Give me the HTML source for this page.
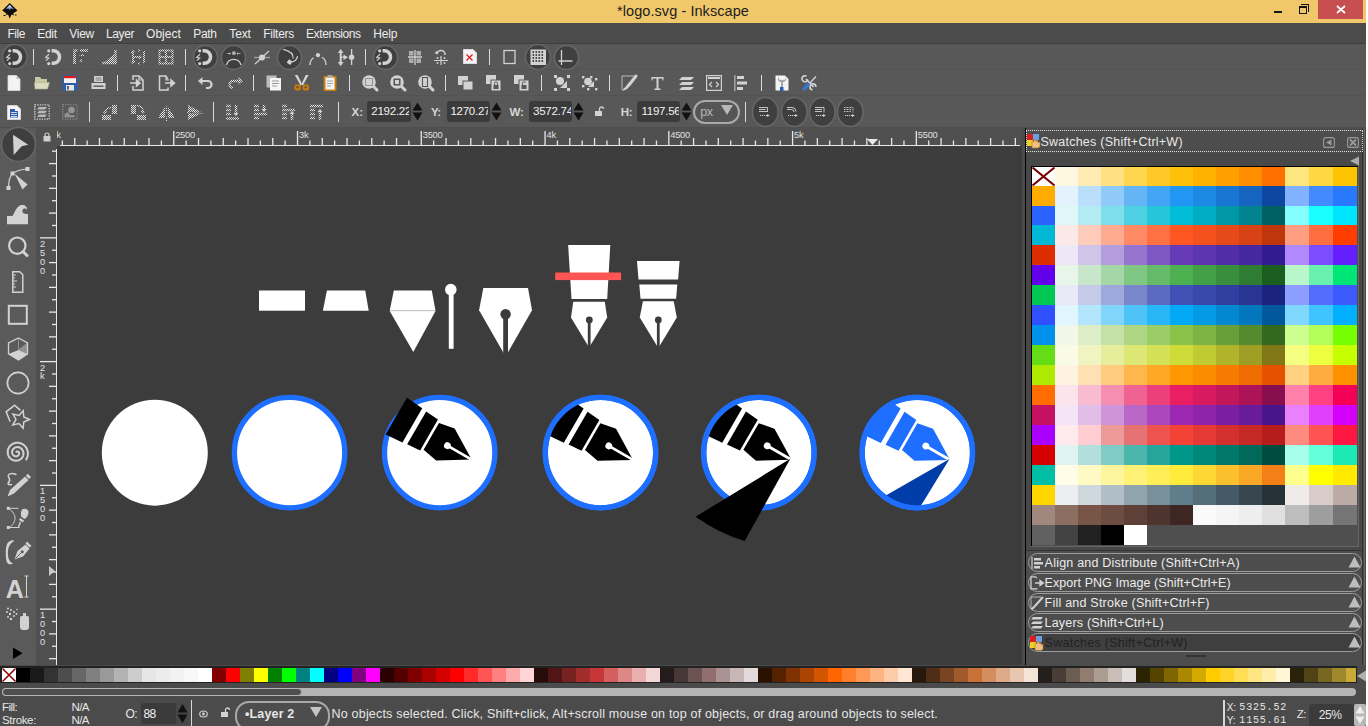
<!DOCTYPE html><html><head><meta charset="utf-8"><style>
*{margin:0;padding:0;box-sizing:border-box}
body{width:1368px;height:726px;overflow:hidden;position:relative;background:#4b4b4b;font-family:"Liberation Sans",sans-serif}
div{position:absolute}
.t{white-space:nowrap;line-height:1}
svg{position:absolute;overflow:visible}
</style></head><body>
<svg width="0" height="0" style="position:absolute;left:0;top:0"><defs><pattern id="ck" width="2" height="2" patternUnits="userSpaceOnUse"><rect width="1" height="1" fill="#e2e2e2"/><rect x="1" y="1" width="1" height="1" fill="#e2e2e2"/></pattern></defs></svg>
<div style="left:0px;top:0px;width:1368px;height:23px;background:#f0c86b"></div>
<svg style="left:1px;top:2px;" width="18" height="18" viewBox="0 0 18 18"><defs><linearGradient id="lg" x1="0" y1="0" x2="0" y2="1"><stop offset="0" stop-color="#ffffff"/><stop offset="1" stop-color="#3a6ab0"/></linearGradient></defs><path d="M8.7 1L16.5 8.5L12 11.5L13.5 13.5L10.5 12.5L8.7 16.5L7 12.5L4.5 13L5.5 11.5L1.2 8.5Z" fill="#0d0d0d"/><path d="M8.7 2.8L13 7.2L10 6.6L8.7 8L7.3 6.6L4.4 7.2Z" fill="url(#lg)"/><path d="M2.5 13.5h2M14 13h1.5" stroke="#111" stroke-width="1.2"/></svg>
<div style="left:1274px;top:11px;width:8px;height:2px;background:#151515"></div>
<div style="left:1301px;top:4px;width:8px;height:8px;border:1px solid #151515;border-width:1px 1px 0 0"></div>
<div style="left:1299px;top:6px;width:8px;height:8px;border:1px solid #151515;border-top-width:2px;background:#f0c86b"></div>
<div style="left:1318px;top:0px;width:45px;height:19px;background:#c84f4f"></div>
<svg style="left:1336px;top:5px;" width="10" height="9" viewBox="0 0 10 9"><path d="M1 1L9 8M9 1L1 8" stroke="#fff" stroke-width="1.7"/></svg>
<div style="left:0px;top:23px;width:1368px;height:20px;background:#4b4b4b"></div>
<div style="left:0px;top:43px;width:1368px;height:1px;background:#3e3e3e"></div>
<div style="left:0px;top:44px;width:1368px;height:84px;background:#585858"></div>
<div style="left:0px;top:69px;width:1368px;height:1px;background:#535353"></div>
<div style="left:0px;top:95px;width:1368px;height:1px;background:#535353"></div>
<div style="left:0px;top:127px;width:1368px;height:1px;background:#4e4e4e"></div>
<svg style="left:0.7999999999999989px;top:43.2px;" width="27.6" height="27.6" viewBox="0 0 27.6 27.6"><ellipse cx="13.8" cy="13.8" rx="12.3" ry="12.3" fill="#3f3f3f" stroke="#676767" stroke-width="1.5"/></svg>
<svg style="left:4.6px;top:47px;" width="20" height="20" viewBox="0 0 20 20"><g transform="translate(10 10)"><path d="M-2.4 -6.25H-0.7A6.25 6.25 0 0 1 -0.7 6.25H-2.4" fill="none" stroke="#d2d2d2" stroke-width="3.5"/><circle cx="-5.3" cy="-6.2" r="1.6" fill="#d2d2d2"/><circle cx="-5.3" cy="6.6" r="1.6" fill="#d2d2d2"/><path d="M-5 -2.8L-8.3 0.3L-5.3 1L-8.3 3.6" stroke="#d2d2d2" stroke-width="1.2" fill="none"/></g></svg>
<div style="left:33px;top:49px;width:1.3px;height:16px;background:#dadada"></div>
<svg style="left:44px;top:47px;" width="20" height="20" viewBox="0 0 20 20"><g transform="translate(10 10)"><path d="M-2.4 -6.25H-0.7A6.25 6.25 0 0 1 -0.7 6.25H-2.4" fill="none" stroke="#d2d2d2" stroke-width="3.5"/><circle cx="-5.3" cy="-6.2" r="1.6" fill="#d2d2d2"/><circle cx="-5.3" cy="6.6" r="1.6" fill="#d2d2d2"/><path d="M-5 -2.8L-8.3 0.3L-5.3 1L-8.3 3.6" stroke="#d2d2d2" stroke-width="1.2" fill="none"/></g></svg>
<svg style="left:73px;top:49px;" width="16" height="16" viewBox="0 0 16 16"><path d="M1.5 15V1.5h3M7 1.5h8" stroke="url(#ck)" stroke-width="2.5" fill="none"/><path d="M1.5 6v9" stroke="url(#ck)" stroke-width="2.5" fill="none"/><path d="M6 12l3-2v4z M9 5l3 2h-6z" fill="url(#ck)"/></svg>
<svg style="left:101px;top:49px;" width="17" height="16" viewBox="0 0 17 16"><path d="M1 14h15M14.5 1v14" stroke="url(#ck)" stroke-width="2.5" fill="none"/><path d="M4 13L13 5v8z" fill="url(#ck)"/></svg>
<svg style="left:130px;top:49px;" width="16" height="16" viewBox="0 0 16 16"><path d="M3 3v10M14 2v12M4 8h6" stroke="url(#ck)" stroke-width="2" fill="none"/><path d="M12 8l-3-2.5v5z" fill="url(#ck)"/><path d="M3 0.5l-2.5 3.5h5zM3 15.5l-2.5-3.5h5z" fill="url(#ck)"/><path d="M8 1.5h2M8 14.5h2" stroke="url(#ck)" stroke-width="2"/></svg>
<svg style="left:158px;top:49px;" width="16" height="16" viewBox="0 0 16 16"><path d="M1.5 1.5h13v13h-13zM8 1.5v13M1.5 8h13" stroke="url(#ck)" stroke-width="2" fill="none"/></svg>
<div style="left:185px;top:49px;width:1.3px;height:16px;background:#dadada"></div>
<svg style="left:191.5px;top:43.5px;" width="27.0" height="27.0" viewBox="0 0 27.0 27.0"><ellipse cx="13.5" cy="13.5" rx="12.0" ry="12.0" fill="#3f3f3f" stroke="#676767" stroke-width="1.5"/></svg>
<svg style="left:195px;top:47px;" width="20" height="20" viewBox="0 0 20 20"><g transform="translate(10 10)"><path d="M-2.4 -6.25H-0.7A6.25 6.25 0 0 1 -0.7 6.25H-2.4" fill="none" stroke="#d2d2d2" stroke-width="3.5"/><circle cx="-5.3" cy="-6.2" r="1.6" fill="#d2d2d2"/><circle cx="-5.3" cy="6.6" r="1.6" fill="#d2d2d2"/><path d="M-5 -2.8L-8.3 0.3L-5.3 1L-8.3 3.6" stroke="#d2d2d2" stroke-width="1.2" fill="none"/></g></svg>
<svg style="left:220.0px;top:43.5px;" width="27.0" height="27.0" viewBox="0 0 27.0 27.0"><ellipse cx="13.5" cy="13.5" rx="12.0" ry="12.0" fill="#3f3f3f" stroke="#676767" stroke-width="1.5"/></svg>
<svg style="left:225px;top:49px;" width="17" height="17" viewBox="0 0 17 17"><path d="M1.5 16A7.5 7.5 0 0 1 16 16" fill="none" stroke="#d2d2d2" stroke-width="1.3"/><rect x="7.3" y="2.5" width="3.2" height="3.2" fill="#d2d2d2" opacity=".85"/><path d="M2 4.5L5.5 4.5M15.5 4.5L12 4.5" stroke="#d2d2d2" stroke-width="1" opacity=".7"/><path d="M6 4.5L4.5 3v3zM11.5 4.5L13 3v3z" fill="#d2d2d2" opacity=".7"/></svg>
<svg style="left:254px;top:49px;" width="17" height="16" viewBox="0 0 17 16"><path d="M1 15L15 2" stroke="#d2d2d2" stroke-width="1.2"/><path d="M0 8.5h16" stroke="#d2d2d2" stroke-width="1.3" opacity=".6"/><circle cx="8" cy="8.5" r="3" fill="#d2d2d2"/></svg>
<svg style="left:275.5px;top:43.5px;" width="27.0" height="27.0" viewBox="0 0 27.0 27.0"><ellipse cx="13.5" cy="13.5" rx="12.0" ry="12.0" fill="#3f3f3f" stroke="#676767" stroke-width="1.5"/></svg>
<svg style="left:270px;top:44px;" width="90" height="26" viewBox="0 0 90 26"><path d="M13.2 5.3C18 6.5 24 9.5 23 14.5" fill="none" stroke="#d2d2d2" stroke-width="1.2"/><path d="M27.6 12.2C27 15 24.5 17.5 22 18" fill="none" stroke="#d2d2d2" stroke-width="1.2"/><rect x="17.5" y="16" width="4.2" height="4.2" transform="rotate(35 19.6 18.1)" fill="#d2d2d2"/><path d="M40.1 21A7.9 7.9 0 0 1 43.6 13.7M51.9 13.3A7.9 7.9 0 0 1 55.8 21" fill="none" stroke="#d2d2d2" stroke-width="1.3"/><circle cx="48" cy="11.2" r="2.1" fill="#d2d2d2"/><path d="M70.7 7v14" stroke="#d2d2d2" stroke-width="2"/><path d="M70.7 5L67.8 9h5.8zM70.7 22L67.8 18h5.8zM78 13.2L73.5 10.5v5.4z" fill="#d2d2d2"/><path d="M71 13.2h3M81.6 5v16" stroke="#d2d2d2" stroke-width="1.3"/><circle cx="81.6" cy="13.2" r="2.7" fill="#d2d2d2"/></svg>
<div style="left:365px;top:49px;width:1.3px;height:16px;background:#dadada"></div>
<svg style="left:371.5px;top:43.5px;" width="27.0" height="27.0" viewBox="0 0 27.0 27.0"><ellipse cx="13.5" cy="13.5" rx="12.0" ry="12.0" fill="#3f3f3f" stroke="#676767" stroke-width="1.5"/></svg>
<svg style="left:375px;top:47px;" width="20" height="20" viewBox="0 0 20 20"><g transform="translate(10 10)"><path d="M-2.4 -6.25H-0.7A6.25 6.25 0 0 1 -0.7 6.25H-2.4" fill="none" stroke="#d2d2d2" stroke-width="3.5"/><circle cx="-5.3" cy="-6.2" r="1.6" fill="#d2d2d2"/><circle cx="-5.3" cy="6.6" r="1.6" fill="#d2d2d2"/><path d="M-5 -2.8L-8.3 0.3L-5.3 1L-8.3 3.6" stroke="#d2d2d2" stroke-width="1.2" fill="none"/></g></svg>
<svg style="left:407px;top:49px;" width="16" height="16" viewBox="0 0 16 16"><path d="M1 8h14M8 1v15" stroke="#d2d2d2" stroke-width="1.3"/><path d="M2 2h4.5v4.5H2zM9.5 2H14v4.5H9.5zM2 9.5h4.5V14H2zM9.5 9.5H14V14H9.5z" fill="#d2d2d2" opacity=".7"/></svg>
<svg style="left:433px;top:49px;" width="16" height="17" viewBox="0 0 16 17"><path d="M4 5a4 4 0 0 1 8 1" fill="none" stroke="#d2d2d2" stroke-width="1.5"/><path d="M1.5 4l3-2.5 0.5 4z" fill="#d2d2d2"/><path d="M1 11.5h14M8 7v9" stroke="#d2d2d2" stroke-width="1.2"/><circle cx="4.5" cy="9" r="1" fill="#d2d2d2"/><circle cx="11.5" cy="9" r="1" fill="#d2d2d2"/><circle cx="4.5" cy="14" r="1" fill="#d2d2d2"/><circle cx="11.5" cy="14" r="1" fill="#d2d2d2"/></svg>
<svg style="left:463px;top:49px;" width="14" height="15" viewBox="0 0 14 15"><path d="M0.5 0.5h9.5l3.5 3.5v10.5h-13z" fill="#f4f4f4" stroke="#ddd" stroke-width="1"/><path d="M3.5 5.5l6 6M9.5 5.5l-6 6" stroke="#e8141a" stroke-width="1.2"/></svg>
<div style="left:489px;top:49px;width:1.3px;height:16px;background:#dadada"></div>
<svg style="left:503px;top:49px;" width="14" height="16" viewBox="0 0 14 16"><rect x="1" y="1.5" width="11" height="13" fill="none" stroke="#d2d2d2" stroke-width="1.3"/></svg>
<svg style="left:524px;top:43px;" width="28" height="28" viewBox="0 0 28 28"><ellipse cx="14" cy="14" rx="12.5" ry="12.5" fill="#3f3f3f" stroke="#676767" stroke-width="1.5"/></svg>
<svg style="left:530px;top:49px;" width="17" height="16" viewBox="0 0 17 16"><rect x="0.5" y="0.5" width="15.5" height="15.5" fill="#d2d2d2"/><path d="M2.5 3h12M2.5 6h12M2.5 9h12M2.5 12h12" stroke="#1b1b1b" stroke-width="1.3" stroke-dasharray="1.6 1.4"/></svg>
<svg style="left:552.5px;top:43.5px;" width="27.0" height="27.0" viewBox="0 0 27.0 27.0"><ellipse cx="13.5" cy="13.5" rx="12.0" ry="12.0" fill="#3f3f3f" stroke="#676767" stroke-width="1.5"/></svg>
<svg style="left:558px;top:49px;" width="16" height="16" viewBox="0 0 16 16"><path d="M3.5 1v15M0.5 12h14" stroke="#d2d2d2" stroke-width="1.3"/></svg>
<svg style="left:7px;top:75px;" width="14" height="16" viewBox="0 0 14 16"><path d="M1 0.5h8.5l3.5 3.5v11.5h-12z" fill="#f3f3f3" stroke="#dcdcdc" stroke-width="0.8"/><path d="M9.5 0.5v3.5h3.5" fill="#bbb"/></svg>
<svg style="left:34px;top:76px;" width="16" height="14" viewBox="0 0 16 14"><path d="M1 1h5l1.5 2H13v9H1z" fill="#c6cba5"/><path d="M0.5 6.5h15l-2 6.5H1z" fill="#d9dcc0" stroke="#aeb38c" stroke-width="0.6"/></svg>
<svg style="left:62px;top:75px;" width="16" height="16" viewBox="0 0 16 16"><rect x="0.5" y="0.5" width="15" height="15" rx="1.5" fill="#2f5ea8"/><rect x="2" y="1" width="12" height="7" fill="#f2f2f2"/><rect x="2" y="1" width="12" height="2.2" fill="#e1191c"/><rect x="4" y="10" width="8" height="5.5" fill="#e8e8e8"/><rect x="5" y="11" width="2" height="3.5" fill="#4a6aa0"/></svg>
<svg style="left:91px;top:75px;" width="15" height="15" viewBox="0 0 15 15"><rect x="3" y="1" width="9" height="6" fill="#d2d2d2"/><path d="M4.5 3h6M4.5 5h6" stroke="#666" stroke-width=".8"/><rect x="0.5" y="8" width="14" height="6" fill="#d2d2d2"/><rect x="2.5" y="10.5" width="10" height="1.5" fill="#5e5e5e"/></svg>
<div style="left:117px;top:75px;width:1.3px;height:16px;background:#dadada"></div>
<svg style="left:130px;top:75px;" width="16" height="16" viewBox="0 0 16 16"><path d="M3 5V1h6l4 4v10H3v-4" fill="none" stroke="#d2d2d2" stroke-width="1.5"/><path d="M9 1v4h4" fill="none" stroke="#d2d2d2" stroke-width="1.2"/><path d="M0 8h6M10 8L6.5 5v6z" stroke="#d2d2d2" stroke-width="1.5" fill="#d2d2d2"/></svg>
<svg style="left:158px;top:75px;" width="17" height="16" viewBox="0 0 17 16"><path d="M10 4.5L8 1H1.5v14H10v-2.5" fill="none" stroke="#d2d2d2" stroke-width="1.5"/><path d="M8 1v4h3" fill="none" stroke="#d2d2d2" stroke-width="1.2"/><path d="M7 8h6M16.5 8L13 5v6z" stroke="#d2d2d2" stroke-width="1.6" fill="#d2d2d2"/></svg>
<div style="left:185px;top:75px;width:1.3px;height:16px;background:#dadada"></div>
<svg style="left:198px;top:76px;" width="16" height="14" viewBox="0 0 16 14"><path d="M3 5h7a3.5 3.5 0 0 1 0 7H8" fill="none" stroke="#d2d2d2" stroke-width="2.2"/><path d="M0 5L4.5 1v8z" fill="#d2d2d2"/></svg>
<svg style="left:227px;top:76px;" width="16" height="14" viewBox="0 0 16 14"><path d="M13 5H6a3.5 3.5 0 0 0 0 7" fill="none" stroke="url(#ck)" stroke-width="2.4"/><path d="M16 5L11.5 1v8z" fill="url(#ck)"/></svg>
<div style="left:253px;top:75px;width:1.3px;height:16px;background:#dadada"></div>
<svg style="left:266px;top:75px;" width="16" height="16" viewBox="0 0 16 16"><rect x="0.5" y="0.5" width="10" height="12" fill="#bdbdbd"/><rect x="4" y="3" width="11" height="12.5" fill="#f5f5f5"/><path d="M6 6h7M6 8.5h7M6 11h5" stroke="#9a9a9a" stroke-width="1"/></svg>
<svg style="left:294px;top:75px;" width="16" height="16" viewBox="0 0 16 16"><path d="M0.8 0L3.6 0L8.2 9.5L6.6 10.5Z" fill="#d6d6d6"/><path d="M14.6 0L11.8 0L7.2 9.5L8.8 10.5Z" fill="#d6d6d6"/><rect x="0.4" y="9.6" width="6.3" height="6" rx="1.8" fill="#c97c0e"/><rect x="8.7" y="9.6" width="6.3" height="6" rx="1.8" fill="#c97c0e"/><circle cx="3.5" cy="12.2" r="1.3" fill="#7a5a2a"/><circle cx="11.8" cy="12.2" r="1.3" fill="#7a5a2a"/></svg>
<svg style="left:323px;top:75px;" width="14" height="16" viewBox="0 0 14 16"><rect x="0.5" y="1" width="13" height="15" rx="1" fill="#c97d0d"/><rect x="2.5" y="2.5" width="9" height="12" fill="#f4f4f4"/><rect x="4.5" y="0" width="5" height="2.5" fill="#aaa"/><path d="M4 6h6M4 8.5h6M4 11h4" stroke="#999" stroke-width=".9"/></svg>
<div style="left:349px;top:75px;width:1.3px;height:16px;background:#dadada"></div>
<svg style="left:362px;top:75px;" width="16" height="16" viewBox="0 0 16 16"><circle cx="7" cy="7" r="6.8" fill="#d2d2d2"/><path d="M11.5 11.5L15 15" stroke="#d2d2d2" stroke-width="3" stroke-linecap="round"/><rect x="3.5" y="3.5" width="7" height="7" fill="none" stroke="#555" stroke-width="1.1" stroke-dasharray="1 1"/></svg>
<svg style="left:390px;top:75px;" width="16" height="16" viewBox="0 0 16 16"><circle cx="7" cy="7" r="6.8" fill="#d2d2d2"/><path d="M11.5 11.5L15 15" stroke="#d2d2d2" stroke-width="3" stroke-linecap="round"/><rect x="3.5" y="3.5" width="7" height="7" fill="#555"/><rect x="5" y="5" width="4" height="4" fill="#d2d2d2"/></svg>
<svg style="left:418px;top:75px;" width="16" height="16" viewBox="0 0 16 16"><circle cx="7" cy="7" r="6.8" fill="#d2d2d2"/><path d="M11.5 11.5L15 15" stroke="#d2d2d2" stroke-width="3" stroke-linecap="round"/><rect x="4.5" y="2.5" width="5" height="9" fill="none" stroke="#555" stroke-width="1.1"/></svg>
<div style="left:445px;top:75px;width:1.3px;height:16px;background:#dadada"></div>
<svg style="left:458px;top:76px;" width="16" height="14" viewBox="0 0 16 14"><rect x="0" y="0" width="10" height="9" fill="#d2d2d2"/><rect x="5" y="5" width="10" height="9" fill="#d2d2d2" stroke="#585858" stroke-width="1"/></svg>
<svg style="left:486px;top:75px;" width="16" height="16" viewBox="0 0 16 16"><rect x="0" y="0" width="10" height="9" fill="#d2d2d2"/><rect x="5" y="5" width="10" height="11" fill="#d2d2d2" stroke="#585858" stroke-width="1"/><rect x="7.5" y="10" width="5" height="4" fill="#555"/><path d="M8.5 10V8.5a1.5 1.5 0 0 1 3 0V10" fill="none" stroke="#555" stroke-width="1"/></svg>
<svg style="left:514px;top:75px;" width="16" height="16" viewBox="0 0 16 16"><rect x="0" y="0" width="10" height="9" fill="#d2d2d2"/><rect x="5" y="5" width="10" height="11" fill="#d2d2d2" stroke="#585858" stroke-width="1"/><rect x="7.5" y="10" width="5" height="4" fill="#555"/><path d="M8.5 10V8.5a1.5 1.5 0 0 1 3 -.5" fill="none" stroke="#555" stroke-width="1"/></svg>
<div style="left:541px;top:75px;width:1.3px;height:16px;background:#dadada"></div>
<svg style="left:554px;top:75px;" width="16" height="16" viewBox="0 0 16 16"><rect x="0" y="0" width="3" height="3" fill="#d2d2d2"/><rect x="13" y="0" width="3" height="3" fill="#d2d2d2"/><rect x="0" y="13" width="3" height="3" fill="#d2d2d2"/><rect x="13" y="13" width="3" height="3" fill="#d2d2d2"/><circle cx="6" cy="6" r="4" fill="#d2d2d2"/><path d="M13 6v7H6z" fill="#d2d2d2"/></svg>
<svg style="left:582px;top:76px;" width="16" height="14" viewBox="0 0 16 14"><rect x="0" y="0" width="2.4" height="2.4" fill="#d2d2d2"/><rect x="8" y="0" width="2.4" height="2.4" fill="#d2d2d2"/><rect x="13" y="2" width="2.4" height="2.4" fill="#d2d2d2"/><rect x="0" y="9" width="2.4" height="2.4" fill="#d2d2d2"/><rect x="5" y="12" width="2.4" height="2.4" fill="#d2d2d2"/><rect x="13" y="12" width="2.4" height="2.4" fill="#d2d2d2"/><circle cx="6" cy="5.5" r="3.8" fill="#d2d2d2"/><path d="M12 5v6H6z" fill="#d2d2d2"/></svg>
<div style="left:609px;top:75px;width:1.3px;height:16px;background:#dadada"></div>
<svg style="left:621px;top:75px;" width="16" height="16" viewBox="0 0 16 16"><path d="M1 15V1h12" fill="none" stroke="#d2d2d2" stroke-width="1" opacity=".8"/><path d="M15 1C12 5 9 9 6.5 11.5" stroke="#d2d2d2" stroke-width="3" stroke-linecap="round"/><path d="M7 10.5C5 11 3 13 1 15.5 4 15.5 7 14 7.5 12z" fill="#d2d2d2"/></svg>
<svg style="left:651px;top:76px;" width="14" height="14" viewBox="0 0 14 14"><path d="M0.5 1h12v3.5h-.8l-.7-2H7.5v10h2v1.5h-6v-1.5h2v-10H2l-.7 2H.5z" fill="#d2d2d2"/></svg>
<svg style="left:679px;top:76px;" width="15" height="14" viewBox="0 0 15 14"><path d="M3 1h12l-3 3H0zM3 6h12l-3 3H0zM3 11h12l-3 3H0z" fill="#d2d2d2"/></svg>
<svg style="left:706px;top:75px;" width="16" height="16" viewBox="0 0 16 16"><rect x="0.6" y="0.6" width="14.8" height="14.8" fill="none" stroke="#d2d2d2" stroke-width="1.2"/><rect x="2" y="2" width="12" height="2" fill="#d2d2d2"/><path d="M6 7L3.5 9.5 6 12M10 7l2.5 2.5L10 12" fill="none" stroke="#d2d2d2" stroke-width="1.2"/></svg>
<svg style="left:734px;top:75px;" width="14" height="16" viewBox="0 0 14 16"><rect x="0" y="0" width="1.6" height="16" fill="#d2d2d2" opacity=".6"/><rect x="3" y="1" width="7" height="3" fill="#d2d2d2"/><rect x="3" y="6.5" width="10" height="3" fill="#d2d2d2"/><rect x="3" y="12" width="6" height="3" fill="#d2d2d2"/></svg>
<div style="left:761px;top:75px;width:1.3px;height:16px;background:#dadada"></div>
<svg style="left:775px;top:75px;" width="14" height="16" viewBox="0 0 14 16"><path d="M0.5 0.5h9.5l3.5 3.5v11.5h-13z" fill="#f4f4f4"/><path d="M3.5 2a3 3 0 0 0 2.5 5v5h2V7a3 3 0 0 0 2.5-5v2.5L7 5 4 4.5z" fill="#a8a8a8"/><rect x="5" y="12" width="3.5" height="4" fill="#2d5bb5"/></svg>
<svg style="left:802px;top:75px;" width="15" height="16" viewBox="0 0 15 16"><path d="M4 4L11.5 12" stroke="#d2d2d2" stroke-width="1.8"/><path d="M4.5 1.2A3 3 0 1 0 5.8 4.6" fill="none" stroke="#d2d2d2" stroke-width="1.6"/><path d="M10.5 14.8A3 3 0 1 1 13.9 12" fill="none" stroke="#d2d2d2" stroke-width="1.6"/><path d="M7.5 8.5L14 1.5" stroke="#d2d2d2" stroke-width="1.4"/><path d="M2 14L6.5 9.5" stroke="#3b76d0" stroke-width="3.2" stroke-linecap="round"/></svg>
<svg style="left:7px;top:105px;" width="14" height="15" viewBox="0 0 14 15"><path d="M0.5 0.5h9.5l3.5 3.5v10.5h-13z" fill="#f6f6f6" stroke="#ddd" stroke-width=".8"/><path d="M3 4h5v2h3v6.5H3z" fill="#2c5eb0"/><path d="M4 7.5h6M4 9.5h6M4 11.5h6" stroke="#f6f6f6" stroke-width=".8"/></svg>
<svg style="left:34px;top:104px;" width="16" height="16" viewBox="0 0 16 16"><rect x="0.8" y="0.8" width="14.4" height="14.4" fill="none" stroke="#d2d2d2" stroke-width="1.3" stroke-dasharray="1.3 1.2"/><path d="M5 3h8l-2 2.5H3zM5 6.8h8l-2 2.5H3zM5 10.6h8l-2 2.5H3z" fill="#d2d2d2" opacity=".8"/></svg>
<svg style="left:62px;top:104px;" width="16" height="16" viewBox="0 0 16 16"><rect x="0.8" y="0.8" width="14.4" height="14.4" fill="none" stroke="#d2d2d2" stroke-width="1.1" stroke-dasharray="1.1 1.4" opacity=".55"/><circle cx="9.5" cy="6" r="3.3" fill="#d2d2d2" opacity=".5"/><path d="M2.5 13.5V10l3-2 3 3 4 0v2.5z" fill="#d2d2d2" opacity=".45"/></svg>
<div style="left:89px;top:102px;width:1.3px;height:20px;background:#dadada"></div>
<svg style="left:101px;top:104px;" width="17" height="17" viewBox="0 0 17 17"><path d="M11 1h5v9h-5zM1 11h9v5H1z" fill="url(#ck)"/><path d="M10 3.5a6 6 0 0 0-6 5" fill="none" stroke="url(#ck)" stroke-width="1.4"/><path d="M1.5 7.5l2.5 3 2.5-3z" fill="url(#ck)"/></svg>
<svg style="left:130px;top:104px;" width="17" height="17" viewBox="0 0 17 17"><path d="M1 1h5v9H1zM7 11h9v5H7z" fill="url(#ck)"/><path d="M7 1.5a6 6 0 0 1 6 6" fill="none" stroke="url(#ck)" stroke-width="1.4"/><path d="M10.5 7l2.5 3 2.5-3z" fill="url(#ck)"/></svg>
<svg style="left:158px;top:104px;" width="17" height="17" viewBox="0 0 17 17"><path d="M7 3v11H0zM10 3v11h7z" fill="url(#ck)"/><path d="M8.5 1v16" stroke="url(#ck)" stroke-width="1.2" stroke-dasharray="1.5 1"/></svg>
<svg style="left:187px;top:104px;" width="16" height="17" viewBox="0 0 16 17"><path d="M1 1l13 7H1zM1 9.5h13L1 16z" fill="url(#ck)"/><path d="M0 8.8h16" stroke="url(#ck)" stroke-width="1.2" stroke-dasharray="1.5 1"/></svg>
<div style="left:213px;top:102px;width:1.3px;height:20px;background:#dadada"></div>
<svg style="left:226px;top:104px;" width="14" height="17" viewBox="0 0 14 17"><path d="M0 2h5M0 6h5M0 10h5M0 14.5h13" stroke="url(#ck)" stroke-width="2.5" fill="none"/><path d="M10 1v10" stroke="url(#ck)" stroke-width="2.5" fill="none"/><path d="M7.5 9l2.5 3 2.5-3" fill="#d2d2d2"/></svg>
<svg style="left:254px;top:104px;" width="14" height="17" viewBox="0 0 14 17"><path d="M0 2h5M0 6h5M0 10h13M0 14h5" stroke="url(#ck)" stroke-width="2.5" fill="none"/><path d="M10 1v6" stroke="url(#ck)" stroke-width="2.5" fill="none"/><path d="M7.5 5l2.5 3 2.5-3" fill="#d2d2d2"/></svg>
<svg style="left:282px;top:104px;" width="14" height="17" viewBox="0 0 14 17"><path d="M0 2h5M0 6h13M0 10h5M0 14h5" stroke="url(#ck)" stroke-width="2.5" fill="none"/><path d="M10 9v7" stroke="url(#ck)" stroke-width="2.5" fill="none"/><path d="M7.5 10l2.5-3 2.5 3" fill="#d2d2d2"/></svg>
<svg style="left:310px;top:104px;" width="14" height="17" viewBox="0 0 14 17"><path d="M0 2h13M0 6h5M0 10h5M0 14h5" stroke="url(#ck)" stroke-width="2.5" fill="none"/><path d="M10 7v9" stroke="url(#ck)" stroke-width="2.5" fill="none"/><path d="M7.5 8l2.5-3 2.5 3" fill="#d2d2d2"/></svg>
<div style="left:338px;top:102px;width:1.3px;height:20px;background:#dadada"></div>
<div style="left:367px;top:101px;width:44px;height:21px;background:#3b3b3b;border-radius:3px"></div>
<svg style="left:412px;top:101px;" width="11" height="21" viewBox="0 0 11 21"><path d="M5.5 1.5L10.5 9.5H.5zM5.5 19.5L10.5 11.5H.5z" fill="#111"/></svg>
<div style="left:446.5px;top:101px;width:43px;height:21px;background:#3b3b3b;border-radius:3px"></div>
<svg style="left:490.5px;top:101px;" width="11" height="21" viewBox="0 0 11 21"><path d="M5.5 1.5L10.5 9.5H.5zM5.5 19.5L10.5 11.5H.5z" fill="#111"/></svg>
<div style="left:529px;top:101px;width:43px;height:21px;background:#3b3b3b;border-radius:3px"></div>
<svg style="left:573px;top:101px;" width="11" height="21" viewBox="0 0 11 21"><path d="M5.5 1.5L10.5 9.5H.5zM5.5 19.5L10.5 11.5H.5z" fill="#111"/></svg>
<svg style="left:594px;top:106px;" width="10" height="10" viewBox="0 0 10 10"><rect x="1" y="5" width="7" height="5" fill="#d2d2d2"/><path d="M5.5 5V3a2 2 0 0 1 4 0" fill="none" stroke="#d2d2d2" stroke-width="1.3"/></svg>
<div style="left:637px;top:101px;width:43px;height:21px;background:#3b3b3b;border-radius:3px"></div>
<svg style="left:681px;top:101px;" width="11" height="21" viewBox="0 0 11 21"><path d="M5.5 1.5L10.5 9.5H.5zM5.5 19.5L10.5 11.5H.5z" fill="#111"/></svg>
<div style="left:693px;top:99.5px;width:47px;height:24px;border:2px solid #aaaaaa;border-radius:12px;background:#555"></div>
<svg style="left:720px;top:104px;" width="15" height="12" viewBox="0 0 15 12"><path d="M1 1h12L7 11z" fill="#b8b8b8"/></svg>
<div style="left:745px;top:102px;width:1.3px;height:20px;background:#dadada"></div>
<svg style="left:751.4000000000001px;top:95.7px;" width="28.6" height="32" viewBox="0 0 28.6 32"><ellipse cx="14.3" cy="16" rx="12.8" ry="14.5" fill="#3f3f3f" stroke="#676767" stroke-width="1.5"/></svg>
<svg style="left:779.7px;top:95.7px;" width="28.6" height="32" viewBox="0 0 28.6 32"><ellipse cx="14.3" cy="16" rx="12.8" ry="14.5" fill="#3f3f3f" stroke="#676767" stroke-width="1.5"/></svg>
<svg style="left:807.7px;top:95.7px;" width="28.6" height="32" viewBox="0 0 28.6 32"><ellipse cx="14.3" cy="16" rx="12.8" ry="14.5" fill="#3f3f3f" stroke="#676767" stroke-width="1.5"/></svg>
<svg style="left:836.0px;top:95.7px;" width="28.6" height="32" viewBox="0 0 28.6 32"><ellipse cx="14.3" cy="16" rx="12.8" ry="14.5" fill="#3f3f3f" stroke="#676767" stroke-width="1.5"/></svg>
<svg style="left:759px;top:106px;" width="13" height="12" viewBox="0 0 13 12"><path d="M0 1.5h8.5M0 3.5h6.5M8.5 1.5v4.5M0 5.5h8.5" stroke="#d2d2d2" stroke-width="0.9" fill="none"/><path d="M1 9.5h7" stroke="#d2d2d2" stroke-width="1" stroke-dasharray="1.2 .8"/><path d="M8 8l2.8 1.5L8 11z" fill="#d2d2d2"/></svg>
<svg style="left:787px;top:106px;" width="13" height="12" viewBox="0 0 13 12"><path d="M0 1.5h5a4 4 0 0 1 4 4M0 3.5h4.5a2.5 2.5 0 0 1 2.5 2.5" stroke="#d2d2d2" stroke-width="0.9" fill="none"/><path d="M1 9.5h7" stroke="#d2d2d2" stroke-width="1" stroke-dasharray="1.2 .8"/><path d="M8 8l2.8 1.5L8 11z" fill="#d2d2d2"/></svg>
<svg style="left:815px;top:106px;" width="13" height="12" viewBox="0 0 13 12"><path d="M0 1.5h9M0 3.5h7M0 5.5h7M9 1.5v5" stroke="#d2d2d2" stroke-width="0.9" fill="none"/><path d="M1 9.5h7" stroke="#d2d2d2" stroke-width="1" stroke-dasharray="1.2 .8"/><path d="M8 8l2.8 1.5L8 11z" fill="#d2d2d2"/></svg>
<svg style="left:844px;top:106px;" width="13" height="12" viewBox="0 0 13 12"><path d="M0 1.5h9M0 3.5h7M0 5.5h7M9 1.5v5" stroke="#d2d2d2" stroke-width="0.9" stroke-dasharray="1 .5" fill="none"/><path d="M1 9.5h7" stroke="#d2d2d2" stroke-width="1" stroke-dasharray="1.2 .8"/><path d="M8 8l2.8 1.5L8 11z" fill="#d2d2d2"/></svg>
<div style="left:0px;top:128px;width:36px;height:537px;background:#5a5a5a"></div>
<div style="left:36px;top:128px;width:986px;height:537px;background:#505050"></div>
<div style="left:57px;top:146px;width:965px;height:519px;background:#3c3c3c"></div>
<div style="left:1022px;top:128px;width:3px;height:537px;background:#4c4c4c"></div>
<div style="left:1025px;top:128px;width:1px;height:537px;background:#000"></div>
<svg style="left:-0.3999999999999986px;top:125.6px;" width="37.0" height="37.0" viewBox="0 0 37.0 37.0"><ellipse cx="18.5" cy="18.5" rx="17.0" ry="17.0" fill="#3f3f3f" stroke="#676767" stroke-width="1.5"/></svg>
<svg style="left:10px;top:132px;" width="20" height="24" viewBox="0 0 20 24"><path d="M3 2.7L18.2 12.8 11.7 14.2 3.7 22.9z" fill="#d2d2d2"/></svg>
<svg style="left:6px;top:167px;" width="24" height="25" viewBox="0 0 24 25"><path d="M2.5 21C2.5 13 5 8 6.5 6.5 10 4 15 2.5 21.5 2" fill="none" stroke="#d2d2d2" stroke-width="1.1"/><rect x="0.5" y="19" width="4" height="4" fill="#d2d2d2"/><rect x="4.5" y="4.5" width="4" height="4" fill="#d2d2d2"/><rect x="19.5" y="0" width="4" height="4" fill="#d2d2d2"/><path d="M8.5 6.5L21.5 17.5 16.5 22.5z" fill="#d2d2d2"/></svg>
<svg style="left:6px;top:203px;" width="23" height="23" viewBox="0 0 23 23"><path d="M1 13H6.5C9 9 11 2 16 2C19.5 2 21.5 4 21 7C20 5 17 5 16.5 7.5C16 10 18 11 22 11V21.3H1Z" fill="#d2d2d2"/></svg>
<svg style="left:7px;top:236px;" width="21" height="22" viewBox="0 0 21 22"><circle cx="10.3" cy="9.7" r="8.2" fill="none" stroke="#d2d2d2" stroke-width="2.2"/><path d="M16 15.5L20 19.5" stroke="#d2d2d2" stroke-width="3" stroke-linecap="round"/></svg>
<svg style="left:12px;top:271px;" width="12" height="22" viewBox="0 0 12 22"><path d="M0.8 0.8h7l3 3v17.5H.8z" fill="none" stroke="#d2d2d2" stroke-width="1.5"/><path d="M1 4h3M1 7h2M1 10h4M1 13h2M1 16h3" stroke="#d2d2d2" stroke-width="1"/></svg>
<svg style="left:7px;top:304px;" width="22" height="22" viewBox="0 0 22 22"><rect x="1.8" y="1.8" width="18" height="18" fill="none" stroke="#d2d2d2" stroke-width="2"/></svg>
<svg style="left:7px;top:337px;" width="22" height="24" viewBox="0 0 22 24"><path d="M11.5 1L20.5 6V17L11.5 23 1.5 17V6z" fill="none" stroke="#d2d2d2" stroke-width="1.3"/><path d="M1.5 17L11.5 13 20.5 17 11.5 23z" fill="#d2d2d2"/><path d="M11.5 13V1M11.5 13 20.5 6V17z" fill="#d2d2d2" opacity=".45" stroke="#d2d2d2" stroke-width="1"/></svg>
<svg style="left:6px;top:371px;" width="24" height="24" viewBox="0 0 24 24"><circle cx="12" cy="12" r="10.6" fill="none" stroke="#d2d2d2" stroke-width="1.7"/></svg>
<svg style="left:3px;top:402px;" width="30" height="30" viewBox="0 0 30 30"><path d="M6.9 19 L3.2 9.800000000000011 L11.6 3.1999999999999886 L16.9 7.9" fill="none" stroke="#d2d2d2" stroke-width="1.6" stroke-linecap="round"/><path d="M20.20 8.77 L20.80 15.00 L26.50 17.56 L20.76 20.05 L20.08 26.27 L15.94 21.58 L9.82 22.86 L13.00 17.47 L9.89 12.04 L16.00 13.40Z" fill="none" stroke="#d2d2d2" stroke-width="1.5" stroke-linejoin="miter"/></svg>
<svg style="left:5.5px;top:441px;" width="24" height="23" viewBox="0 0 24 23"><path d="M10.37 10.85 L10.45 10.76 L10.54 10.68 L10.64 10.60 L10.76 10.54 L10.89 10.48 L11.02 10.44 L11.17 10.41 L11.33 10.40 L11.49 10.41 L11.65 10.44 L11.82 10.48 L11.99 10.55 L12.15 10.63 L12.31 10.74 L12.46 10.86 L12.60 11.01 L12.73 11.17 L12.85 11.35 L12.94 11.55 L13.02 11.76 L13.08 11.98 L13.12 12.22 L13.14 12.46 L13.12 12.71 L13.09 12.96 L13.02 13.22 L12.93 13.47 L12.81 13.72 L12.67 13.96 L12.50 14.19 L12.30 14.40 L12.08 14.60 L11.83 14.78 L11.56 14.94 L11.28 15.07 L10.97 15.17 L10.65 15.25 L10.32 15.30 L9.98 15.31 L9.63 15.29 L9.28 15.24 L8.94 15.15 L8.59 15.02 L8.26 14.86 L7.93 14.66 L7.63 14.43 L7.34 14.17 L7.07 13.88 L6.83 13.55 L6.62 13.20 L6.44 12.83 L6.30 12.43 L6.19 12.02 L6.13 11.59 L6.10 11.15 L6.12 10.71 L6.18 10.26 L6.28 9.81 L6.43 9.38 L6.62 8.95 L6.86 8.53 L7.14 8.14 L7.46 7.77 L7.82 7.43 L8.21 7.11 L8.64 6.84 L9.09 6.60 L9.57 6.41 L10.08 6.26 L10.60 6.16 L11.14 6.11 L11.68 6.11 L12.23 6.17 L12.78 6.27 L13.32 6.44 L13.84 6.65 L14.35 6.91 L14.84 7.23 L15.30 7.60 L15.73 8.01 L16.12 8.46 L16.47 8.96 L16.78 9.49 L17.03 10.06 L17.23 10.65 L17.38 11.26 L17.46 11.89 L17.49 12.54 L17.46 13.19 L17.36 13.84 L17.20 14.48 L16.98 15.11 L16.69 15.72 L16.35 16.31 L15.95 16.87 L15.49 17.39 L14.98 17.87 L14.42 18.30 L13.82 18.68 L13.18 19.01 L12.51 19.28 L11.81 19.48 L11.08 19.61 L10.34 19.68 L9.59 19.68 L8.84 19.60 L8.09 19.46 L7.36 19.24 L6.64 18.95 L5.95 18.59 L5.29 18.16 L4.66 17.67 L4.09 17.12 L3.56 16.51 L3.09 15.85 L2.68 15.14 L2.34 14.39 L2.07 13.60 L1.87 12.79 L1.75 11.96 L1.71 11.11 L1.75 10.25 L1.87 9.40 L2.07 8.56 L2.36 7.73 L2.72 6.93 L3.16 6.16 L3.68 5.43 L4.26 4.75 L4.92 4.12 L5.63 3.56 L6.40 3.06 L7.22 2.63 L8.08 2.28 L8.97 2.01 L9.90 1.82 L10.84 1.72 L11.80 1.72 L12.75 1.80 L13.70 1.97 L14.64 2.24 L15.55 2.59 L16.44 3.04 L17.28 3.56 L18.07 4.17 L18.80 4.85 L19.48 5.61 L20.08 6.43 L20.60 7.31 L21.04 8.24 L21.40 9.21 L21.66 10.22 L21.82 11.26 L21.89 12.31 L21.86 13.37 L21.73 14.43 L21.49 15.47 L21.16 16.50 L20.73 17.50 L20.20 18.45" fill="none" stroke="#d2d2d2" stroke-width="2" stroke-linecap="round"/></svg>
<svg style="left:5px;top:472px;" width="26" height="26" viewBox="0 0 26 26"><path d="M2.5 24.5L5 18L20 4.5L23.5 8L9 21.5Z" fill="#d2d2d2"/><path d="M20.8 3.8L22.8 1.8L26 5L24 7Z" fill="#d2d2d2"/><path d="M11 2.5C7 0.5 2 2 3.5 5 4.5 7 6 8 3.5 10.5 2 12 4 13 6.5 12.5" fill="none" stroke="#d2d2d2" stroke-width="1.5" stroke-linecap="round"/></svg>
<svg style="left:6px;top:506px;" width="25" height="25" viewBox="0 0 25 25"><rect x="0.8" y="0.8" width="3" height="3" fill="#d2d2d2"/><rect x="0.8" y="20" width="3" height="3" fill="#d2d2d2"/><path d="M3.5 2.3h9M3.5 21.5h10M3 3c8 5 8 13 0 19" fill="none" stroke="#d2d2d2" stroke-width="1"/><path d="M17 3c3-1 6 1 5.5 4-.5 3-2 5-4 6l-3-2c-1-2-1-7 1.5-8z" fill="#d2d2d2"/><path d="M14 12l4 2.5-1 2-4-2.5z" fill="#d2d2d2"/><path d="M14.5 16l-2 5" stroke="#d2d2d2" stroke-width="1.5"/></svg>
<svg style="left:5px;top:539px;" width="26" height="28" viewBox="0 0 26 28"><path d="M2 5C4 1.5 8 0.5 9.5 2 7 3 3.5 6 3 12 2.5 18 4 23 8 24.5 6 26 2 26 1.2 21 0.5 15 0.5 9 2 5Z" fill="#d2d2d2"/><path d="M9.5 20.5L12.5 12L20.5 5.5L24.5 9.5L18 17.5Z" fill="#d2d2d2"/><path d="M20.5 4.5L22 2.5L26.5 7L24.5 8.5Z" fill="#d2d2d2"/><circle cx="17.2" cy="12.8" r="1.5" fill="#5a5a5a"/><path d="M10.5 19.5L16.5 13.5" stroke="#5a5a5a" stroke-width="1"/></svg>
<svg style="left:24px;top:575px;" width="5" height="23" viewBox="0 0 5 23"><path d="M2.5 1v21M0.5 1h4M0.5 22h4" stroke="#d2d2d2" stroke-width="1"/></svg>
<svg style="left:6px;top:607px;" width="23" height="24" viewBox="0 0 23 24"><path d="M17 6h3v3h-3z M15.5 9h6a1.5 1.5 0 0 1 1.5 1.5V20a3 3 0 0 1-3 3h-3a3 3 0 0 1-3-3v-9.5A1.5 1.5 0 0 1 15.5 9z" fill="#d2d2d2"/><g fill="#d2d2d2"><circle cx="2" cy="1.5" r="1"/><circle cx="5" cy="3" r="1"/><circle cx="8" cy="5" r="1"/><circle cx="1" cy="5" r="1"/><circle cx="4" cy="7" r="1.2"/><circle cx="8" cy="9" r="1"/><circle cx="2" cy="10" r="1"/><circle cx="5" cy="12" r="1.2"/><circle cx="10.5" cy="7" r="1"/><circle cx="11" cy="2.5" r=".8"/></g></svg>
<svg style="left:12px;top:647px;" width="11" height="13" viewBox="0 0 11 13"><path d="M1 0.5L10.5 6.3 1 12z" fill="#000"/></svg>
<div style="left:60px;top:144.5px;width:960px;height:1.3px;background:#e8e8e8"></div>
<svg style="left:60px;top:128px;" width="962" height="18" viewBox="0 0 962 18"><rect x="1.71" y="12.50" width="1.3" height="4.5" fill="#e8e8e8"/><rect x="14.09" y="10.00" width="1.3" height="7" fill="#e8e8e8"/><rect x="26.46" y="12.50" width="1.3" height="4.5" fill="#e8e8e8"/><rect x="38.84" y="10.00" width="1.3" height="7" fill="#e8e8e8"/><rect x="51.22" y="12.50" width="1.3" height="4.5" fill="#e8e8e8"/><rect x="63.59" y="10.00" width="1.3" height="7" fill="#e8e8e8"/><rect x="75.97" y="12.50" width="1.3" height="4.5" fill="#e8e8e8"/><rect x="88.35" y="10.00" width="1.3" height="7" fill="#e8e8e8"/><rect x="100.72" y="12.50" width="1.3" height="4.5" fill="#e8e8e8"/><rect x="113.10" y="3.00" width="1.3" height="14" fill="#e8e8e8"/><rect x="125.48" y="12.50" width="1.3" height="4.5" fill="#e8e8e8"/><rect x="137.85" y="10.00" width="1.3" height="7" fill="#e8e8e8"/><rect x="150.23" y="12.50" width="1.3" height="4.5" fill="#e8e8e8"/><rect x="162.61" y="10.00" width="1.3" height="7" fill="#e8e8e8"/><rect x="174.98" y="12.50" width="1.3" height="4.5" fill="#e8e8e8"/><rect x="187.36" y="10.00" width="1.3" height="7" fill="#e8e8e8"/><rect x="199.74" y="12.50" width="1.3" height="4.5" fill="#e8e8e8"/><rect x="212.11" y="10.00" width="1.3" height="7" fill="#e8e8e8"/><rect x="224.49" y="12.50" width="1.3" height="4.5" fill="#e8e8e8"/><rect x="236.87" y="3.00" width="1.3" height="14" fill="#e8e8e8"/><rect x="249.24" y="12.50" width="1.3" height="4.5" fill="#e8e8e8"/><rect x="261.62" y="10.00" width="1.3" height="7" fill="#e8e8e8"/><rect x="274.00" y="12.50" width="1.3" height="4.5" fill="#e8e8e8"/><rect x="286.37" y="10.00" width="1.3" height="7" fill="#e8e8e8"/><rect x="298.75" y="12.50" width="1.3" height="4.5" fill="#e8e8e8"/><rect x="311.13" y="10.00" width="1.3" height="7" fill="#e8e8e8"/><rect x="323.50" y="12.50" width="1.3" height="4.5" fill="#e8e8e8"/><rect x="335.88" y="10.00" width="1.3" height="7" fill="#e8e8e8"/><rect x="348.26" y="12.50" width="1.3" height="4.5" fill="#e8e8e8"/><rect x="360.63" y="3.00" width="1.3" height="14" fill="#e8e8e8"/><rect x="373.01" y="12.50" width="1.3" height="4.5" fill="#e8e8e8"/><rect x="385.39" y="10.00" width="1.3" height="7" fill="#e8e8e8"/><rect x="397.76" y="12.50" width="1.3" height="4.5" fill="#e8e8e8"/><rect x="410.14" y="10.00" width="1.3" height="7" fill="#e8e8e8"/><rect x="422.52" y="12.50" width="1.3" height="4.5" fill="#e8e8e8"/><rect x="434.89" y="10.00" width="1.3" height="7" fill="#e8e8e8"/><rect x="447.27" y="12.50" width="1.3" height="4.5" fill="#e8e8e8"/><rect x="459.65" y="10.00" width="1.3" height="7" fill="#e8e8e8"/><rect x="472.02" y="12.50" width="1.3" height="4.5" fill="#e8e8e8"/><rect x="484.40" y="3.00" width="1.3" height="14" fill="#e8e8e8"/><rect x="496.78" y="12.50" width="1.3" height="4.5" fill="#e8e8e8"/><rect x="509.15" y="10.00" width="1.3" height="7" fill="#e8e8e8"/><rect x="521.53" y="12.50" width="1.3" height="4.5" fill="#e8e8e8"/><rect x="533.91" y="10.00" width="1.3" height="7" fill="#e8e8e8"/><rect x="546.28" y="12.50" width="1.3" height="4.5" fill="#e8e8e8"/><rect x="558.66" y="10.00" width="1.3" height="7" fill="#e8e8e8"/><rect x="571.04" y="12.50" width="1.3" height="4.5" fill="#e8e8e8"/><rect x="583.41" y="10.00" width="1.3" height="7" fill="#e8e8e8"/><rect x="595.79" y="12.50" width="1.3" height="4.5" fill="#e8e8e8"/><rect x="608.17" y="3.00" width="1.3" height="14" fill="#e8e8e8"/><rect x="620.54" y="12.50" width="1.3" height="4.5" fill="#e8e8e8"/><rect x="632.92" y="10.00" width="1.3" height="7" fill="#e8e8e8"/><rect x="645.30" y="12.50" width="1.3" height="4.5" fill="#e8e8e8"/><rect x="657.67" y="10.00" width="1.3" height="7" fill="#e8e8e8"/><rect x="670.05" y="12.50" width="1.3" height="4.5" fill="#e8e8e8"/><rect x="682.43" y="10.00" width="1.3" height="7" fill="#e8e8e8"/><rect x="694.80" y="12.50" width="1.3" height="4.5" fill="#e8e8e8"/><rect x="707.18" y="10.00" width="1.3" height="7" fill="#e8e8e8"/><rect x="719.56" y="12.50" width="1.3" height="4.5" fill="#e8e8e8"/><rect x="731.93" y="3.00" width="1.3" height="14" fill="#e8e8e8"/><rect x="744.31" y="12.50" width="1.3" height="4.5" fill="#e8e8e8"/><rect x="756.69" y="10.00" width="1.3" height="7" fill="#e8e8e8"/><rect x="769.06" y="12.50" width="1.3" height="4.5" fill="#e8e8e8"/><rect x="781.44" y="10.00" width="1.3" height="7" fill="#e8e8e8"/><rect x="793.82" y="12.50" width="1.3" height="4.5" fill="#e8e8e8"/><rect x="806.19" y="10.00" width="1.3" height="7" fill="#e8e8e8"/><rect x="818.57" y="12.50" width="1.3" height="4.5" fill="#e8e8e8"/><rect x="830.95" y="10.00" width="1.3" height="7" fill="#e8e8e8"/><rect x="843.32" y="12.50" width="1.3" height="4.5" fill="#e8e8e8"/><rect x="855.70" y="3.00" width="1.3" height="14" fill="#e8e8e8"/><rect x="868.08" y="12.50" width="1.3" height="4.5" fill="#e8e8e8"/><rect x="880.45" y="10.00" width="1.3" height="7" fill="#e8e8e8"/><rect x="892.83" y="12.50" width="1.3" height="4.5" fill="#e8e8e8"/><rect x="905.21" y="10.00" width="1.3" height="7" fill="#e8e8e8"/><rect x="917.58" y="12.50" width="1.3" height="4.5" fill="#e8e8e8"/><rect x="929.96" y="10.00" width="1.3" height="7" fill="#e8e8e8"/><rect x="942.34" y="12.50" width="1.3" height="4.5" fill="#e8e8e8"/><rect x="954.71" y="10.00" width="1.3" height="7" fill="#e8e8e8"/></svg>
<div class="t" style="left:57px;top:131px;width:6px;height:10px;overflow:hidden"><div class="t" style="left:-6px;top:0;font-size:9.3px;color:#e0e0e0">2k</div></div>
<svg style="left:43px;top:132px;" width="8" height="10" viewBox="0 0 8 10"><rect x="0.5" y="4" width="7" height="5.5" fill="#cfcfcf"/><path d="M2 4.5V3a2 2 0 0 1 4 0v1.5" fill="none" stroke="#cfcfcf" stroke-width="1.2"/></svg>
<div style="left:56px;top:149px;width:1.3px;height:516px;background:#e8e8e8"></div>
<svg style="left:36px;top:146px;" width="22" height="520" viewBox="0 0 22 520"><rect x="16.00" y="4.56" width="5" height="1.3" fill="#e8e8e8"/><rect x="13.00" y="16.94" width="8" height="1.3" fill="#e8e8e8"/><rect x="16.00" y="29.32" width="5" height="1.3" fill="#e8e8e8"/><rect x="13.00" y="41.69" width="8" height="1.3" fill="#e8e8e8"/><rect x="16.00" y="54.07" width="5" height="1.3" fill="#e8e8e8"/><rect x="13.00" y="66.45" width="8" height="1.3" fill="#e8e8e8"/><rect x="16.00" y="78.82" width="5" height="1.3" fill="#e8e8e8"/><rect x="4.00" y="91.20" width="17" height="1.3" fill="#e8e8e8"/><rect x="16.00" y="103.58" width="5" height="1.3" fill="#e8e8e8"/><rect x="13.00" y="115.95" width="8" height="1.3" fill="#e8e8e8"/><rect x="16.00" y="128.33" width="5" height="1.3" fill="#e8e8e8"/><rect x="13.00" y="140.71" width="8" height="1.3" fill="#e8e8e8"/><rect x="16.00" y="153.08" width="5" height="1.3" fill="#e8e8e8"/><rect x="13.00" y="165.46" width="8" height="1.3" fill="#e8e8e8"/><rect x="16.00" y="177.84" width="5" height="1.3" fill="#e8e8e8"/><rect x="13.00" y="190.21" width="8" height="1.3" fill="#e8e8e8"/><rect x="16.00" y="202.59" width="5" height="1.3" fill="#e8e8e8"/><rect x="4.00" y="214.97" width="17" height="1.3" fill="#e8e8e8"/><rect x="16.00" y="227.34" width="5" height="1.3" fill="#e8e8e8"/><rect x="13.00" y="239.72" width="8" height="1.3" fill="#e8e8e8"/><rect x="16.00" y="252.10" width="5" height="1.3" fill="#e8e8e8"/><rect x="13.00" y="264.47" width="8" height="1.3" fill="#e8e8e8"/><rect x="16.00" y="276.85" width="5" height="1.3" fill="#e8e8e8"/><rect x="13.00" y="289.23" width="8" height="1.3" fill="#e8e8e8"/><rect x="16.00" y="301.60" width="5" height="1.3" fill="#e8e8e8"/><rect x="13.00" y="313.98" width="8" height="1.3" fill="#e8e8e8"/><rect x="16.00" y="326.36" width="5" height="1.3" fill="#e8e8e8"/><rect x="4.00" y="338.73" width="17" height="1.3" fill="#e8e8e8"/><rect x="16.00" y="351.11" width="5" height="1.3" fill="#e8e8e8"/><rect x="13.00" y="363.49" width="8" height="1.3" fill="#e8e8e8"/><rect x="16.00" y="375.86" width="5" height="1.3" fill="#e8e8e8"/><rect x="13.00" y="388.24" width="8" height="1.3" fill="#e8e8e8"/><rect x="16.00" y="400.62" width="5" height="1.3" fill="#e8e8e8"/><rect x="13.00" y="412.99" width="8" height="1.3" fill="#e8e8e8"/><rect x="16.00" y="425.37" width="5" height="1.3" fill="#e8e8e8"/><rect x="13.00" y="437.75" width="8" height="1.3" fill="#e8e8e8"/><rect x="16.00" y="450.12" width="5" height="1.3" fill="#e8e8e8"/><rect x="4.00" y="462.50" width="17" height="1.3" fill="#e8e8e8"/><rect x="16.00" y="474.88" width="5" height="1.3" fill="#e8e8e8"/><rect x="13.00" y="487.25" width="8" height="1.3" fill="#e8e8e8"/><rect x="16.00" y="499.63" width="5" height="1.3" fill="#e8e8e8"/><rect x="13.00" y="512.01" width="8" height="1.3" fill="#e8e8e8"/></svg>
<svg style="left:866px;top:138px;" width="13" height="8" viewBox="0 0 13 8"><path d="M1 1h11L6.5 7z" fill="#e8e8e8"/></svg>
<svg style="left:48px;top:565px;" width="8" height="12" viewBox="0 0 8 12"><path d="M1 1v10L7 6z" fill="#c8c8c8"/></svg>
<svg style="left:0px;top:0px;clip-path:inset(146px 346px 61px 57px)" width="1368" height="726" viewBox="0 0 1368 726"><rect x="259" y="290.5" width="46" height="20.2" fill="#fff"/><path d="M326.9 290.5H365.2L368.7 310.7H322.9Z" fill="#fff"/><path d="M393.8 290.5H431.8L435.5 310.7H389.7Z" fill="#fff"/><path d="M389.7 310.9H435.5L413.3 352Z" fill="#fff"/><path d="M390 310.8H435" stroke="#bbb" stroke-width=".6"/><circle cx="450.8" cy="289.6" r="5.8" fill="#fff"/><rect x="448.8" y="289" width="4.8" height="59.8" fill="#fff"/><path d="M483.3 288H528L532 310.2L505.6 356.4L479.1 310.2Z" fill="#fff"/><circle cx="505.6" cy="314.2" r="5.2" fill="#3c3c3c"/><path d="M505.6 314V358" stroke="#3c3c3c" stroke-width="4.8"/><path d="M568.1 245H610.3L607.2 299H571.5Z" fill="#fff"/><path d="M573.3 301.8H604.8L607.2 317.6L589.1 347.5L571 317.6Z" fill="#fff"/><circle cx="589.3" cy="319.9" r="3.4" fill="#3c3c3c"/><path d="M589.2 320V349" stroke="#3c3c3c" stroke-width="2.8"/><rect x="555.2" y="272.5" width="65.9" height="7.6" fill="#ff5555"/><g transform="translate(658.3 319.9)"><g fill="#fff"><path d="M-21.3 -59 L21.3 -59 L19.8 -40.5 L-19.8 -40.5Z"/><path d="M-19 -35.5 L19 -35.5 L17.8 -21.2 L-17.8 -21.2Z"/><path d="M-15.4 -18.6 L15.4 -18.6 L18.5 -2.3 L0 28 L-18.5 -2.3Z"/></g><circle cx="0" cy="0" r="3.4" fill="#3c3c3c"/><path d="M0 0 L0 29" stroke="#3c3c3c" stroke-width="2.8"/></g><circle cx="154.8" cy="452.65" r="53" fill="#fff"/><circle cx="289.6" cy="452.65" r="55.2" fill="#fff" stroke="#1e6eff" stroke-width="5.3"/><circle cx="439.7" cy="452.65" r="55.2" fill="#fff" stroke="#1e6eff" stroke-width="5.3"/><circle cx="600.5" cy="452.65" r="55.2" fill="#fff" stroke="#1e6eff" stroke-width="5.3"/><circle cx="758.9" cy="452.65" r="55.2" fill="#fff" stroke="#1e6eff" stroke-width="5.3"/><circle cx="917.35" cy="452.65" r="55.2" fill="#fff" stroke="#1e6eff" stroke-width="5.3"/><g transform="translate(447.4 445.6) rotate(-60)"><g fill="#000"><path d="M-21.3 -59 L21.3 -59 L19.8 -40.5 L-19.8 -40.5Z"/><path d="M-19 -35.5 L19 -35.5 L17.8 -21.2 L-17.8 -21.2Z"/><path d="M-15.4 -18.6 L15.4 -18.6 L18.5 -2.3 L0 28 L-18.5 -2.3Z"/></g><circle cx="0" cy="0" r="3.4" fill="#ffffff"/><path d="M0 0 L0 29" stroke="#ffffff" stroke-width="2.8"/></g><defs><clipPath id="c4"><circle cx="600.5" cy="452.65" r="57"/></clipPath><clipPath id="c5"><circle cx="758.9" cy="452.65" r="57"/></clipPath><clipPath id="c6"><circle cx="917.35" cy="452.65" r="57"/></clipPath></defs><g clip-path="url(#c4)"><g transform="translate(608.8 445.9) rotate(-60)"><g fill="#000"><path d="M-21.3 -59 L21.3 -59 L19.8 -40.5 L-19.8 -40.5Z"/><path d="M-19 -35.5 L19 -35.5 L17.8 -21.2 L-17.8 -21.2Z"/><path d="M-15.4 -18.6 L15.4 -18.6 L18.5 -2.3 L0 28 L-18.5 -2.3Z"/></g><circle cx="0" cy="0" r="3.4" fill="#ffffff"/><path d="M0 0 L0 29" stroke="#ffffff" stroke-width="2.8"/></g></g><circle cx="600.5" cy="452.65" r="55.2" fill="none" stroke="#1e6eff" stroke-width="5.3"/><g clip-path="url(#c5)"><g transform="translate(767.2 445.8) rotate(-60)"><g fill="#000"><path d="M-21.3 -59 L21.3 -59 L19.8 -40.5 L-19.8 -40.5Z"/><path d="M-19 -35.5 L19 -35.5 L17.8 -21.2 L-17.8 -21.2Z"/><path d="M-15.4 -18.6 L15.4 -18.6 L18.5 -2.3 L0 28 L-18.5 -2.3Z"/></g><circle cx="0" cy="0" r="3.4" fill="#ffffff"/><path d="M0 0 L0 29" stroke="#ffffff" stroke-width="2.8"/></g></g><circle cx="758.9" cy="452.65" r="55.2" fill="none" stroke="#1e6eff" stroke-width="5.3"/><path d="M790.3 458.8L695.5 516.8Q720 534 744.7 541Z" fill="#000"/><g clip-path="url(#c6)"><g transform="translate(925.8 446) rotate(-60)"><g fill="#1e6eff"><path d="M-21.3 -59 L21.3 -59 L19.8 -40.5 L-19.8 -40.5Z"/><path d="M-19 -35.5 L19 -35.5 L17.8 -21.2 L-17.8 -21.2Z"/><path d="M-15.4 -18.6 L15.4 -18.6 L18.5 -2.3 L0 28 L-18.5 -2.3Z"/></g><circle cx="0" cy="0" r="3.4" fill="#ffffff"/><path d="M0 0 L0 29" stroke="#ffffff" stroke-width="2.8"/></g><path d="M949.5 458.9L850 516L900 540Z" fill="#003da8"/></g><circle cx="917.35" cy="452.65" r="55.2" fill="none" stroke="#1e6eff" stroke-width="5.3"/></svg>
<div style="left:1026px;top:128px;width:342px;height:537px;background:#4d4d4d"></div>
<div style="left:1362px;top:128px;width:1px;height:537px;background:#333"></div>
<div style="left:1363px;top:128px;width:1px;height:537px;background:#4a4a4a"></div>
<div style="left:1364px;top:128px;width:1px;height:537px;background:#666"></div>
<div style="left:1365px;top:128px;width:1px;height:537px;background:#4a4a4a"></div>
<div style="left:1026px;top:130px;width:337px;height:22px;border:1.5px dotted #e0e0e0"></div>
<svg style="left:1027px;top:134px;" width="13" height="14" viewBox="0 0 13 14"><rect x="0" y="0" width="6" height="6" fill="#d42020"/><rect x="6" y="0" width="6" height="6" fill="#6aa0e0"/><rect x="0" y="6" width="6" height="6" fill="#f0d020"/><path d="M5 14V8a1 1 0 0 1 2 0V6.5a1 1 0 0 1 2 0v1a1 1 0 0 1 2 0v1.5a1 1 0 0 1 2 0V12a2.5 2.5 0 0 1-2.5 2H7z" fill="#f0c080" stroke="#b07030" stroke-width=".6"/></svg>
<svg style="left:1323px;top:137px;" width="12" height="11" viewBox="0 0 12 11"><rect x="0.6" y="0.6" width="10.8" height="9.8" rx="2" fill="none" stroke="#9a9a9a" stroke-width="1.1"/><path d="M3 5.5L8.5 2.5v6z" fill="#9a9a9a"/></svg>
<svg style="left:1347px;top:137px;" width="12" height="11" viewBox="0 0 12 11"><rect x="0.6" y="0.6" width="10.8" height="9.8" rx="2" fill="none" stroke="#9a9a9a" stroke-width="1.1"/><path d="M3 2.5l6 6M9 2.5l-6 6" stroke="#9a9a9a" stroke-width="1.8"/></svg>
<div style="left:1026px;top:153px;width:336px;height:397px;background:#484848"></div>
<div style="left:1026px;top:550px;width:336px;height:1px;background:#333"></div>
<svg style="left:1350px;top:156px;" width="10" height="10" viewBox="0 0 10 10"><path d="M0 5L9 .5v9z" fill="#aaaaaa"/></svg>
<div style="left:1031px;top:166px;width:328px;height:381px;background:#4f4f4f"></div>
<div style="left:1031px;top:166px;width:327px;height:1px;background:#000"></div>
<div style="left:1031px;top:166px;width:1px;height:380px;background:#000"></div>
<div style="left:1358px;top:166px;width:1px;height:381px;background:#666"></div>
<div style="left:1031px;top:546px;width:328px;height:1px;background:#666"></div>
<svg style="left:1031px;top:166px;" width="327" height="380" viewBox="0 0 327 380"><rect x="1" y="1" width="23" height="19" fill="#fff"/><path d="M1.5 1.5L23.5 19.5M23.5 1.5L1.5 19.5" stroke="#7a0000" stroke-width="2.2"/><rect x="24" y="1" width="23" height="19" fill="#FFF8E1"/><rect x="47" y="1" width="23" height="19" fill="#FFECB3"/><rect x="70" y="1" width="23" height="19" fill="#FFE082"/><rect x="93" y="1" width="23" height="19" fill="#FFD54F"/><rect x="116" y="1" width="23" height="19" fill="#FFCA28"/><rect x="139" y="1" width="23" height="19" fill="#FFC107"/><rect x="162" y="1" width="23" height="19" fill="#FFB300"/><rect x="185" y="1" width="23" height="19" fill="#FFA000"/><rect x="208" y="1" width="23" height="19" fill="#FF8F00"/><rect x="231" y="1" width="23" height="19" fill="#FF6F00"/><rect x="254" y="1" width="24" height="19" fill="#FFE57F"/><rect x="278" y="1" width="24" height="19" fill="#FFD740"/><rect x="302" y="1" width="24" height="19" fill="#FFC400"/><rect x="1" y="20" width="23" height="20" fill="#FFAB00"/><rect x="24" y="20" width="23" height="20" fill="#E3F2FD"/><rect x="47" y="20" width="23" height="20" fill="#BBDEFB"/><rect x="70" y="20" width="23" height="20" fill="#90CAF9"/><rect x="93" y="20" width="23" height="20" fill="#64B5F6"/><rect x="116" y="20" width="23" height="20" fill="#42A5F5"/><rect x="139" y="20" width="23" height="20" fill="#2196F3"/><rect x="162" y="20" width="23" height="20" fill="#1E88E5"/><rect x="185" y="20" width="23" height="20" fill="#1976D2"/><rect x="208" y="20" width="23" height="20" fill="#1565C0"/><rect x="231" y="20" width="23" height="20" fill="#0D47A1"/><rect x="254" y="20" width="24" height="20" fill="#82B1FF"/><rect x="278" y="20" width="24" height="20" fill="#448AFF"/><rect x="302" y="20" width="24" height="20" fill="#2979FF"/><rect x="1" y="40" width="23" height="19" fill="#2962FF"/><rect x="24" y="40" width="23" height="19" fill="#E0F7FA"/><rect x="47" y="40" width="23" height="19" fill="#B2EBF2"/><rect x="70" y="40" width="23" height="19" fill="#80DEEA"/><rect x="93" y="40" width="23" height="19" fill="#4DD0E1"/><rect x="116" y="40" width="23" height="19" fill="#26C6DA"/><rect x="139" y="40" width="23" height="19" fill="#00BCD4"/><rect x="162" y="40" width="23" height="19" fill="#00ACC1"/><rect x="185" y="40" width="23" height="19" fill="#0097A7"/><rect x="208" y="40" width="23" height="19" fill="#00838F"/><rect x="231" y="40" width="23" height="19" fill="#006064"/><rect x="254" y="40" width="24" height="19" fill="#84FFFF"/><rect x="278" y="40" width="24" height="19" fill="#18FFFF"/><rect x="302" y="40" width="24" height="19" fill="#00E5FF"/><rect x="1" y="59" width="23" height="20" fill="#00B8D4"/><rect x="24" y="59" width="23" height="20" fill="#FBE9E7"/><rect x="47" y="59" width="23" height="20" fill="#FFCCBC"/><rect x="70" y="59" width="23" height="20" fill="#FFAB91"/><rect x="93" y="59" width="23" height="20" fill="#FF8A65"/><rect x="116" y="59" width="23" height="20" fill="#FF7043"/><rect x="139" y="59" width="23" height="20" fill="#FF5722"/><rect x="162" y="59" width="23" height="20" fill="#F4511E"/><rect x="185" y="59" width="23" height="20" fill="#E64A19"/><rect x="208" y="59" width="23" height="20" fill="#D84315"/><rect x="231" y="59" width="23" height="20" fill="#BF360C"/><rect x="254" y="59" width="24" height="20" fill="#FF9E80"/><rect x="278" y="59" width="24" height="20" fill="#FF6E40"/><rect x="302" y="59" width="24" height="20" fill="#FF3D00"/><rect x="1" y="79" width="23" height="20" fill="#DD2C00"/><rect x="24" y="79" width="23" height="20" fill="#EDE7F6"/><rect x="47" y="79" width="23" height="20" fill="#D1C4E9"/><rect x="70" y="79" width="23" height="20" fill="#B39DDB"/><rect x="93" y="79" width="23" height="20" fill="#9575CD"/><rect x="116" y="79" width="23" height="20" fill="#7E57C2"/><rect x="139" y="79" width="23" height="20" fill="#673AB7"/><rect x="162" y="79" width="23" height="20" fill="#5E35B1"/><rect x="185" y="79" width="23" height="20" fill="#512DA8"/><rect x="208" y="79" width="23" height="20" fill="#4527A0"/><rect x="231" y="79" width="23" height="20" fill="#311B92"/><rect x="254" y="79" width="24" height="20" fill="#B388FF"/><rect x="278" y="79" width="24" height="20" fill="#7C4DFF"/><rect x="302" y="79" width="24" height="20" fill="#651FFF"/><rect x="1" y="99" width="23" height="20" fill="#6200EA"/><rect x="24" y="99" width="23" height="20" fill="#E8F5E9"/><rect x="47" y="99" width="23" height="20" fill="#C8E6C9"/><rect x="70" y="99" width="23" height="20" fill="#A5D6A7"/><rect x="93" y="99" width="23" height="20" fill="#81C784"/><rect x="116" y="99" width="23" height="20" fill="#66BB6A"/><rect x="139" y="99" width="23" height="20" fill="#4CAF50"/><rect x="162" y="99" width="23" height="20" fill="#43A047"/><rect x="185" y="99" width="23" height="20" fill="#388E3C"/><rect x="208" y="99" width="23" height="20" fill="#2E7D32"/><rect x="231" y="99" width="23" height="20" fill="#1B5E20"/><rect x="254" y="99" width="24" height="20" fill="#B9F6CA"/><rect x="278" y="99" width="24" height="20" fill="#69F0AE"/><rect x="302" y="99" width="24" height="20" fill="#00E676"/><rect x="1" y="119" width="23" height="20" fill="#00C853"/><rect x="24" y="119" width="23" height="20" fill="#E8EAF6"/><rect x="47" y="119" width="23" height="20" fill="#C5CAE9"/><rect x="70" y="119" width="23" height="20" fill="#9FA8DA"/><rect x="93" y="119" width="23" height="20" fill="#7986CB"/><rect x="116" y="119" width="23" height="20" fill="#5C6BC0"/><rect x="139" y="119" width="23" height="20" fill="#3F51B5"/><rect x="162" y="119" width="23" height="20" fill="#3949AB"/><rect x="185" y="119" width="23" height="20" fill="#303F9F"/><rect x="208" y="119" width="23" height="20" fill="#283593"/><rect x="231" y="119" width="23" height="20" fill="#1A237E"/><rect x="254" y="119" width="24" height="20" fill="#8C9EFF"/><rect x="278" y="119" width="24" height="20" fill="#536DFE"/><rect x="302" y="119" width="24" height="20" fill="#3D5AFE"/><rect x="1" y="139" width="23" height="20" fill="#304FFE"/><rect x="24" y="139" width="23" height="20" fill="#E1F5FE"/><rect x="47" y="139" width="23" height="20" fill="#B3E5FC"/><rect x="70" y="139" width="23" height="20" fill="#81D4FA"/><rect x="93" y="139" width="23" height="20" fill="#4FC3F7"/><rect x="116" y="139" width="23" height="20" fill="#29B6F6"/><rect x="139" y="139" width="23" height="20" fill="#03A9F4"/><rect x="162" y="139" width="23" height="20" fill="#039BE5"/><rect x="185" y="139" width="23" height="20" fill="#0288D1"/><rect x="208" y="139" width="23" height="20" fill="#0277BD"/><rect x="231" y="139" width="23" height="20" fill="#01579B"/><rect x="254" y="139" width="24" height="20" fill="#80D8FF"/><rect x="278" y="139" width="24" height="20" fill="#40C4FF"/><rect x="302" y="139" width="24" height="20" fill="#00B0FF"/><rect x="1" y="159" width="23" height="20" fill="#0091EA"/><rect x="24" y="159" width="23" height="20" fill="#F1F8E9"/><rect x="47" y="159" width="23" height="20" fill="#DCEDC8"/><rect x="70" y="159" width="23" height="20" fill="#C5E1A5"/><rect x="93" y="159" width="23" height="20" fill="#AED581"/><rect x="116" y="159" width="23" height="20" fill="#9CCC65"/><rect x="139" y="159" width="23" height="20" fill="#8BC34A"/><rect x="162" y="159" width="23" height="20" fill="#7CB342"/><rect x="185" y="159" width="23" height="20" fill="#689F38"/><rect x="208" y="159" width="23" height="20" fill="#558B2F"/><rect x="231" y="159" width="23" height="20" fill="#33691E"/><rect x="254" y="159" width="24" height="20" fill="#CCFF90"/><rect x="278" y="159" width="24" height="20" fill="#B2FF59"/><rect x="302" y="159" width="24" height="20" fill="#76FF03"/><rect x="1" y="179" width="23" height="20" fill="#64DD17"/><rect x="24" y="179" width="23" height="20" fill="#F9FBE7"/><rect x="47" y="179" width="23" height="20" fill="#F0F4C3"/><rect x="70" y="179" width="23" height="20" fill="#E6EE9C"/><rect x="93" y="179" width="23" height="20" fill="#DCE775"/><rect x="116" y="179" width="23" height="20" fill="#D4E157"/><rect x="139" y="179" width="23" height="20" fill="#CDDC39"/><rect x="162" y="179" width="23" height="20" fill="#C0CA33"/><rect x="185" y="179" width="23" height="20" fill="#AFB42B"/><rect x="208" y="179" width="23" height="20" fill="#9E9D24"/><rect x="231" y="179" width="23" height="20" fill="#827717"/><rect x="254" y="179" width="24" height="20" fill="#F4FF81"/><rect x="278" y="179" width="24" height="20" fill="#EEFF41"/><rect x="302" y="179" width="24" height="20" fill="#C6FF00"/><rect x="1" y="199" width="23" height="20" fill="#AEEA00"/><rect x="24" y="199" width="23" height="20" fill="#FFF3E0"/><rect x="47" y="199" width="23" height="20" fill="#FFE0B2"/><rect x="70" y="199" width="23" height="20" fill="#FFCC80"/><rect x="93" y="199" width="23" height="20" fill="#FFB74D"/><rect x="116" y="199" width="23" height="20" fill="#FFA726"/><rect x="139" y="199" width="23" height="20" fill="#FF9800"/><rect x="162" y="199" width="23" height="20" fill="#FB8C00"/><rect x="185" y="199" width="23" height="20" fill="#F57C00"/><rect x="208" y="199" width="23" height="20" fill="#EF6C00"/><rect x="231" y="199" width="23" height="20" fill="#E65100"/><rect x="254" y="199" width="24" height="20" fill="#FFD180"/><rect x="278" y="199" width="24" height="20" fill="#FFAB40"/><rect x="302" y="199" width="24" height="20" fill="#FF9100"/><rect x="1" y="219" width="23" height="20" fill="#FF6D00"/><rect x="24" y="219" width="23" height="20" fill="#FCE4EC"/><rect x="47" y="219" width="23" height="20" fill="#F8BBD0"/><rect x="70" y="219" width="23" height="20" fill="#F48FB1"/><rect x="93" y="219" width="23" height="20" fill="#F06292"/><rect x="116" y="219" width="23" height="20" fill="#EC407A"/><rect x="139" y="219" width="23" height="20" fill="#E91E63"/><rect x="162" y="219" width="23" height="20" fill="#D81B60"/><rect x="185" y="219" width="23" height="20" fill="#C2185B"/><rect x="208" y="219" width="23" height="20" fill="#AD1457"/><rect x="231" y="219" width="23" height="20" fill="#880E4F"/><rect x="254" y="219" width="24" height="20" fill="#FF80AB"/><rect x="278" y="219" width="24" height="20" fill="#FF4081"/><rect x="302" y="219" width="24" height="20" fill="#F50057"/><rect x="1" y="239" width="23" height="20" fill="#C51162"/><rect x="24" y="239" width="23" height="20" fill="#F3E5F5"/><rect x="47" y="239" width="23" height="20" fill="#E1BEE7"/><rect x="70" y="239" width="23" height="20" fill="#CE93D8"/><rect x="93" y="239" width="23" height="20" fill="#BA68C8"/><rect x="116" y="239" width="23" height="20" fill="#AB47BC"/><rect x="139" y="239" width="23" height="20" fill="#9C27B0"/><rect x="162" y="239" width="23" height="20" fill="#8E24AA"/><rect x="185" y="239" width="23" height="20" fill="#7B1FA2"/><rect x="208" y="239" width="23" height="20" fill="#6A1B9A"/><rect x="231" y="239" width="23" height="20" fill="#4A148C"/><rect x="254" y="239" width="24" height="20" fill="#EA80FC"/><rect x="278" y="239" width="24" height="20" fill="#E040FB"/><rect x="302" y="239" width="24" height="20" fill="#D500F9"/><rect x="1" y="259" width="23" height="20" fill="#AA00FF"/><rect x="24" y="259" width="23" height="20" fill="#FFEBEE"/><rect x="47" y="259" width="23" height="20" fill="#FFCDD2"/><rect x="70" y="259" width="23" height="20" fill="#EF9A9A"/><rect x="93" y="259" width="23" height="20" fill="#E57373"/><rect x="116" y="259" width="23" height="20" fill="#EF5350"/><rect x="139" y="259" width="23" height="20" fill="#F44336"/><rect x="162" y="259" width="23" height="20" fill="#E53935"/><rect x="185" y="259" width="23" height="20" fill="#D32F2F"/><rect x="208" y="259" width="23" height="20" fill="#C62828"/><rect x="231" y="259" width="23" height="20" fill="#B71C1C"/><rect x="254" y="259" width="24" height="20" fill="#FF8A80"/><rect x="278" y="259" width="24" height="20" fill="#FF5252"/><rect x="302" y="259" width="24" height="20" fill="#FF1744"/><rect x="1" y="279" width="23" height="20" fill="#D50000"/><rect x="24" y="279" width="23" height="20" fill="#E0F2F1"/><rect x="47" y="279" width="23" height="20" fill="#B2DFDB"/><rect x="70" y="279" width="23" height="20" fill="#80CBC4"/><rect x="93" y="279" width="23" height="20" fill="#4DB6AC"/><rect x="116" y="279" width="23" height="20" fill="#26A69A"/><rect x="139" y="279" width="23" height="20" fill="#009688"/><rect x="162" y="279" width="23" height="20" fill="#00897B"/><rect x="185" y="279" width="23" height="20" fill="#00796B"/><rect x="208" y="279" width="23" height="20" fill="#00695C"/><rect x="231" y="279" width="23" height="20" fill="#004D40"/><rect x="254" y="279" width="24" height="20" fill="#A7FFEB"/><rect x="278" y="279" width="24" height="20" fill="#64FFDA"/><rect x="302" y="279" width="24" height="20" fill="#1DE9B6"/><rect x="1" y="299" width="23" height="20" fill="#00BFA5"/><rect x="24" y="299" width="23" height="20" fill="#FFFDE7"/><rect x="47" y="299" width="23" height="20" fill="#FFF9C4"/><rect x="70" y="299" width="23" height="20" fill="#FFF59D"/><rect x="93" y="299" width="23" height="20" fill="#FFF176"/><rect x="116" y="299" width="23" height="20" fill="#FFEE58"/><rect x="139" y="299" width="23" height="20" fill="#FFEB3B"/><rect x="162" y="299" width="23" height="20" fill="#FDD835"/><rect x="185" y="299" width="23" height="20" fill="#FBC02D"/><rect x="208" y="299" width="23" height="20" fill="#F9A825"/><rect x="231" y="299" width="23" height="20" fill="#F57F17"/><rect x="254" y="299" width="24" height="20" fill="#FFFF8D"/><rect x="278" y="299" width="24" height="20" fill="#FFFF00"/><rect x="302" y="299" width="24" height="20" fill="#FFEA00"/><rect x="1" y="319" width="23" height="20" fill="#FFD600"/><rect x="24" y="319" width="23" height="20" fill="#ECEFF1"/><rect x="47" y="319" width="23" height="20" fill="#CFD8DC"/><rect x="70" y="319" width="23" height="20" fill="#B0BEC5"/><rect x="93" y="319" width="23" height="20" fill="#90A4AE"/><rect x="116" y="319" width="23" height="20" fill="#78909C"/><rect x="139" y="319" width="23" height="20" fill="#607D8B"/><rect x="162" y="319" width="23" height="20" fill="#546E7A"/><rect x="185" y="319" width="23" height="20" fill="#455A64"/><rect x="208" y="319" width="23" height="20" fill="#37474F"/><rect x="231" y="319" width="23" height="20" fill="#263238"/><rect x="254" y="319" width="24" height="20" fill="#EFEBE9"/><rect x="278" y="319" width="24" height="20" fill="#D7CCC8"/><rect x="302" y="319" width="24" height="20" fill="#BCAAA4"/><rect x="1" y="339" width="23" height="20" fill="#A1887F"/><rect x="24" y="339" width="23" height="20" fill="#8D6E63"/><rect x="47" y="339" width="23" height="20" fill="#795548"/><rect x="70" y="339" width="23" height="20" fill="#6D4C41"/><rect x="93" y="339" width="23" height="20" fill="#5D4037"/><rect x="116" y="339" width="23" height="20" fill="#4E342E"/><rect x="139" y="339" width="23" height="20" fill="#3E2723"/><rect x="162" y="339" width="23" height="20" fill="#FAFAFA"/><rect x="185" y="339" width="23" height="20" fill="#F5F5F5"/><rect x="208" y="339" width="23" height="20" fill="#EEEEEE"/><rect x="231" y="339" width="23" height="20" fill="#E0E0E0"/><rect x="254" y="339" width="24" height="20" fill="#BDBDBD"/><rect x="278" y="339" width="24" height="20" fill="#9E9E9E"/><rect x="302" y="339" width="24" height="20" fill="#757575"/><rect x="1" y="359" width="23" height="20" fill="#616161"/><rect x="24" y="359" width="23" height="20" fill="#424242"/><rect x="47" y="359" width="23" height="20" fill="#212121"/><rect x="70" y="359" width="23" height="20" fill="#000000"/><rect x="93" y="359" width="23" height="20" fill="#FFFFFF"/></svg>
<div style="left:1028px;top:553px;width:334px;height:19px;border:1.2px solid #9c9c9c;border-radius:10px;background:#4d4d4d"></div>
<svg style="left:1348px;top:556px;" width="13" height="12" viewBox="0 0 13 12"><path d="M6.5 0.5L12.5 11.5H.5z" fill="#bdbdbd"/></svg>
<div style="left:1028px;top:573px;width:334px;height:19px;border:1.2px solid #9c9c9c;border-radius:10px;background:#4d4d4d"></div>
<svg style="left:1348px;top:576px;" width="13" height="12" viewBox="0 0 13 12"><path d="M6.5 0.5L12.5 11.5H.5z" fill="#bdbdbd"/></svg>
<div style="left:1028px;top:593px;width:334px;height:19px;border:1.2px solid #9c9c9c;border-radius:10px;background:#4d4d4d"></div>
<svg style="left:1348px;top:596px;" width="13" height="12" viewBox="0 0 13 12"><path d="M6.5 0.5L12.5 11.5H.5z" fill="#bdbdbd"/></svg>
<div style="left:1028px;top:613px;width:334px;height:19px;border:1.2px solid #9c9c9c;border-radius:10px;background:#4d4d4d"></div>
<svg style="left:1348px;top:616px;" width="13" height="12" viewBox="0 0 13 12"><path d="M6.5 0.5L12.5 11.5H.5z" fill="#bdbdbd"/></svg>
<div style="left:1028px;top:633px;width:334px;height:19px;border:1.2px solid #9c9c9c;border-radius:10px;background:#3f3f3f"></div>
<svg style="left:1348px;top:636px;" width="13" height="12" viewBox="0 0 13 12"><path d="M6.5 0.5L12.5 11.5H.5z" fill="#bdbdbd"/></svg>
<svg style="left:1030px;top:556px;" width="14" height="14" viewBox="0 0 14 14"><path d="M2 1v12" stroke="#d2d2d2" stroke-width="1.2"/><rect x="4" y="2" width="7" height="2.5" fill="#d2d2d2"/><rect x="4" y="6" width="9" height="2.5" fill="#d2d2d2"/><rect x="4" y="10" width="6" height="2.5" fill="#d2d2d2"/></svg>
<svg style="left:1030px;top:576px;" width="14" height="14" viewBox="0 0 14 14"><path d="M7 2L5.5 .8H1v12h6.5" fill="none" stroke="#d2d2d2" stroke-width="1.3"/><path d="M5 7h5M13.5 7L10 4.5v5z" stroke="#d2d2d2" fill="#d2d2d2" stroke-width="1.3"/></svg>
<svg style="left:1030px;top:596px;" width="14" height="14" viewBox="0 0 14 14"><path d="M1 13V1h10" fill="none" stroke="#d2d2d2" stroke-width=".8"/><path d="M13 1L5 10M6 9L1.5 13.5" stroke="#d2d2d2" stroke-width="2"/></svg>
<svg style="left:1030px;top:616px;" width="14" height="14" viewBox="0 0 14 14"><path d="M3 1h10l-2 2.5H1zM3 5.5h10l-2 2.5H1zM3 10h10l-2 2.5H1z" fill="#d2d2d2"/></svg>
<svg style="left:1030px;top:636px;" width="14" height="14" viewBox="0 0 14 14"><rect x="0" y="0" width="6" height="6" fill="#d42020"/><rect x="6" y="0" width="6" height="6" fill="#6aa0e0"/><rect x="0" y="6" width="6" height="6" fill="#f0d020"/><path d="M5 14V8a1 1 0 0 1 2 0V6.5a1 1 0 0 1 2 0v1a1 1 0 0 1 2 0v1.5a1 1 0 0 1 2 0V13a3 3 0 0 1-3 1.5H7z" fill="#f0c080" stroke="#b07030" stroke-width=".6"/></svg>
<div style="left:1186px;top:655px;width:20px;height:1.5px;background:#333"></div>
<div style="left:0px;top:665px;width:1368px;height:23px;background:#4b4b4b"></div>
<svg style="left:0px;top:666px;" width="1368" height="18" viewBox="0 0 1368 18"><rect x="0" y="0" width="1357" height="17" fill="#222"/><rect x="2" y="2" width="14" height="14" fill="#fff"/><path d="M2.5 2.5L15.5 15.5M15.5 2.5L2.5 15.5" stroke="#8a0000" stroke-width="1.5"/><rect x="16" y="2" width="14" height="14" fill="#000000"/><rect x="30" y="2" width="14" height="14" fill="#1a1a1a"/><rect x="44" y="2" width="14" height="14" fill="#333333"/><rect x="58" y="2" width="14" height="14" fill="#4d4d4d"/><rect x="72" y="2" width="14" height="14" fill="#666666"/><rect x="86" y="2" width="14" height="14" fill="#808080"/><rect x="100" y="2" width="14" height="14" fill="#999999"/><rect x="114" y="2" width="14" height="14" fill="#b3b3b3"/><rect x="128" y="2" width="14" height="14" fill="#cccccc"/><rect x="142" y="2" width="14" height="14" fill="#e6e6e6"/><rect x="156" y="2" width="14" height="14" fill="#ececec"/><rect x="170" y="2" width="14" height="14" fill="#f2f2f2"/><rect x="184" y="2" width="14" height="14" fill="#f8f8f8"/><rect x="198" y="2" width="14" height="14" fill="#ffffff"/><rect x="212" y="2" width="14" height="14" fill="#800000"/><rect x="226" y="2" width="14" height="14" fill="#ff0000"/><rect x="240" y="2" width="14" height="14" fill="#808000"/><rect x="254" y="2" width="14" height="14" fill="#ffff00"/><rect x="268" y="2" width="14" height="14" fill="#008000"/><rect x="282" y="2" width="14" height="14" fill="#00ff00"/><rect x="296" y="2" width="14" height="14" fill="#008080"/><rect x="310" y="2" width="14" height="14" fill="#00ffff"/><rect x="324" y="2" width="14" height="14" fill="#000080"/><rect x="338" y="2" width="14" height="14" fill="#0000ff"/><rect x="352" y="2" width="14" height="14" fill="#800080"/><rect x="366" y="2" width="14" height="14" fill="#ff00ff"/><rect x="380" y="2" width="14" height="14" fill="#2b0000"/><rect x="394" y="2" width="14" height="14" fill="#550000"/><rect x="408" y="2" width="14" height="14" fill="#800000"/><rect x="422" y="2" width="14" height="14" fill="#aa0000"/><rect x="436" y="2" width="14" height="14" fill="#d40000"/><rect x="450" y="2" width="14" height="14" fill="#ff0000"/><rect x="464" y="2" width="14" height="14" fill="#ff2a2a"/><rect x="478" y="2" width="14" height="14" fill="#ff5555"/><rect x="492" y="2" width="14" height="14" fill="#ff8080"/><rect x="506" y="2" width="14" height="14" fill="#ffaaaa"/><rect x="520" y="2" width="14" height="14" fill="#ffd5d5"/><rect x="534" y="2" width="14" height="14" fill="#280b0b"/><rect x="548" y="2" width="14" height="14" fill="#501616"/><rect x="562" y="2" width="14" height="14" fill="#782121"/><rect x="576" y="2" width="14" height="14" fill="#a02c2c"/><rect x="590" y="2" width="14" height="14" fill="#c83737"/><rect x="604" y="2" width="14" height="14" fill="#d35f5f"/><rect x="618" y="2" width="14" height="14" fill="#de8787"/><rect x="632" y="2" width="14" height="14" fill="#e9afaf"/><rect x="646" y="2" width="14" height="14" fill="#f4d7d7"/><rect x="660" y="2" width="14" height="14" fill="#241c1c"/><rect x="674" y="2" width="14" height="14" fill="#483737"/><rect x="688" y="2" width="14" height="14" fill="#6c5353"/><rect x="702" y="2" width="14" height="14" fill="#916f6f"/><rect x="716" y="2" width="14" height="14" fill="#ac9393"/><rect x="730" y="2" width="14" height="14" fill="#c8b7b7"/><rect x="744" y="2" width="14" height="14" fill="#e3dbdb"/><rect x="758" y="2" width="14" height="14" fill="#2b1100"/><rect x="772" y="2" width="14" height="14" fill="#552200"/><rect x="786" y="2" width="14" height="14" fill="#803300"/><rect x="800" y="2" width="14" height="14" fill="#aa4400"/><rect x="814" y="2" width="14" height="14" fill="#d45500"/><rect x="828" y="2" width="14" height="14" fill="#ff6600"/><rect x="842" y="2" width="14" height="14" fill="#ff7f2a"/><rect x="856" y="2" width="14" height="14" fill="#ff9955"/><rect x="870" y="2" width="14" height="14" fill="#ffb380"/><rect x="884" y="2" width="14" height="14" fill="#ffccaa"/><rect x="898" y="2" width="14" height="14" fill="#ffe6d5"/><rect x="912" y="2" width="14" height="14" fill="#28170b"/><rect x="926" y="2" width="14" height="14" fill="#502d16"/><rect x="940" y="2" width="14" height="14" fill="#784421"/><rect x="954" y="2" width="14" height="14" fill="#a05a2c"/><rect x="968" y="2" width="14" height="14" fill="#c87137"/><rect x="982" y="2" width="14" height="14" fill="#d38d5f"/><rect x="996" y="2" width="14" height="14" fill="#deaa87"/><rect x="1010" y="2" width="14" height="14" fill="#e9c6af"/><rect x="1024" y="2" width="14" height="14" fill="#f4e3d7"/><rect x="1038" y="2" width="14" height="14" fill="#241f1c"/><rect x="1052" y="2" width="14" height="14" fill="#483e37"/><rect x="1066" y="2" width="14" height="14" fill="#6c5d53"/><rect x="1080" y="2" width="14" height="14" fill="#917c6f"/><rect x="1094" y="2" width="14" height="14" fill="#ac9d93"/><rect x="1108" y="2" width="14" height="14" fill="#c8beb7"/><rect x="1122" y="2" width="14" height="14" fill="#e3dedb"/><rect x="1136" y="2" width="14" height="14" fill="#2b2200"/><rect x="1150" y="2" width="14" height="14" fill="#554400"/><rect x="1164" y="2" width="14" height="14" fill="#806600"/><rect x="1178" y="2" width="14" height="14" fill="#aa8800"/><rect x="1192" y="2" width="14" height="14" fill="#d4aa00"/><rect x="1206" y="2" width="14" height="14" fill="#ffcc00"/><rect x="1220" y="2" width="14" height="14" fill="#ffd42a"/><rect x="1234" y="2" width="14" height="14" fill="#ffdd55"/><rect x="1248" y="2" width="14" height="14" fill="#ffe680"/><rect x="1262" y="2" width="14" height="14" fill="#ffeeaa"/><rect x="1276" y="2" width="14" height="14" fill="#fff6d5"/><rect x="1290" y="2" width="14" height="14" fill="#28220b"/><rect x="1304" y="2" width="14" height="14" fill="#504416"/><rect x="1318" y="2" width="14" height="14" fill="#786721"/><rect x="1332" y="2" width="14" height="14" fill="#a0892c"/><rect x="1346" y="2" width="10" height="14" fill="#c8ab37"/></svg>
<svg style="left:1356px;top:670px;" width="12" height="12" viewBox="0 0 12 12"><path d="M10 .5v11L1 6z" fill="#b0b0b0"/></svg>
<div style="left:0px;top:684px;width:1368px;height:42px;background:#4b4b4b"></div>
<div style="left:2px;top:688px;width:1354px;height:7.5px;background:#b4b4b4;border-radius:4px"></div>
<div style="left:2px;top:688px;width:300px;height:7.5px;background:#4e4e4e;border:1.5px solid #b4b4b4;border-radius:4px"></div>
<div style="left:140.5px;top:702.5px;width:47px;height:21px;background:#3b3b3b;border-radius:3px"></div>
<div style="left:175.5px;top:702.5px;width:12px;height:21px;background:#474747;border-radius:0 3px 3px 0"></div>
<svg style="left:176.5px;top:703px;" width="11" height="21" viewBox="0 0 11 21"><path d="M5.5 1L10.5 9.5H.5zM5.5 20L10.5 11.5H.5z" fill="#111"/></svg>
<div style="left:190.5px;top:700px;width:1.5px;height:26px;background:#d8d8d8"></div>
<svg style="left:199px;top:710px;" width="9" height="8" viewBox="0 0 9 8"><ellipse cx="4.5" cy="4" rx="3.8" ry="3" fill="none" stroke="#d2d2d2" stroke-width="1.1"/><circle cx="4.5" cy="4" r="1.4" fill="#d2d2d2"/></svg>
<svg style="left:220px;top:707px;" width="10" height="10" viewBox="0 0 10 10"><rect x="1" y="5" width="7" height="5" fill="#d2d2d2"/><path d="M5.5 5V3a2 2 0 0 1 4 0" fill="none" stroke="#d2d2d2" stroke-width="1.3"/></svg>
<div style="left:235px;top:700.5px;width:95px;height:30px;border:2px solid #a8a8a8;border-radius:14px;background:#4d4d4d"></div>
<svg style="left:309px;top:706px;" width="14" height="12" viewBox="0 0 14 12"><path d="M1 1h12L7 11z" fill="#c4c4c4"/></svg>
<div style="left:1223px;top:700px;width:1.5px;height:26px;background:#d8d8d8"></div>
<div style="left:1309px;top:704px;width:46px;height:26px;background:#3b3b3b;border-radius:4px"></div>
<svg style="left:1354px;top:704px;" width="12" height="22" viewBox="0 0 12 22"><rect x="0" y="0" width="12" height="22" rx="2" fill="#b8b8b8"/><path d="M6 2L10.5 9.5h-9zM6 20L10.5 12.5h-9z" fill="#eeeeee"/></svg>
<div class="t" style="left:617px;top:4px;font-size:14.5px;color:#1c1c1c;letter-spacing:0.071px;">*logo.svg - Inkscape</div>
<div class="t" style="left:7.5px;top:27.8px;font-size:12px;color:#ececec;letter-spacing:-0.459px;">File</div>
<div class="t" style="left:37.3px;top:27.8px;font-size:12px;color:#ececec;letter-spacing:-0.319px;">Edit</div>
<div class="t" style="left:69.3px;top:27.8px;font-size:12px;color:#ececec;letter-spacing:-0.273px;">View</div>
<div class="t" style="left:106px;top:27.8px;font-size:12px;color:#ececec;letter-spacing:-0.404px;">Layer</div>
<div class="t" style="left:146px;top:27.8px;font-size:12px;color:#ececec;letter-spacing:0.053px;">Object</div>
<div class="t" style="left:193.3px;top:27.8px;font-size:12px;color:#ececec;letter-spacing:-0.321px;">Path</div>
<div class="t" style="left:229.3px;top:27.8px;font-size:12px;color:#ececec;letter-spacing:-0.152px;">Text</div>
<div class="t" style="left:263.3px;top:27.8px;font-size:12px;color:#ececec;letter-spacing:-0.281px;">Filters</div>
<div class="t" style="left:306px;top:27.8px;font-size:12px;color:#ececec;letter-spacing:-0.400px;">Extensions</div>
<div class="t" style="left:373.3px;top:27.8px;font-size:12px;color:#ececec;letter-spacing:-0.170px;">Help</div>
<div class="t" style="left:351.5px;top:106.5px;font-size:11.5px;color:#d6d6d6;letter-spacing:0.067px;font-weight:bold;">X:</div>
<div class="t" style="left:371.3px;top:106.3px;font-size:11.5px;color:#f2f2f2;width:38.2px;overflow:hidden;letter-spacing:-0.25px;">2192.22</div>
<div class="t" style="left:431px;top:106.5px;font-size:11.5px;color:#d6d6d6;letter-spacing:-0.615px;font-weight:bold;">Y:</div>
<div class="t" style="left:450.4px;top:106.3px;font-size:11.5px;color:#f2f2f2;width:37.6px;overflow:hidden;letter-spacing:-0.25px;">1270.27</div>
<div class="t" style="left:509.4px;top:106.5px;font-size:11.5px;color:#d6d6d6;letter-spacing:0.079px;font-weight:bold;">W:</div>
<div class="t" style="left:533px;top:106.3px;font-size:11.5px;color:#f2f2f2;width:37.5px;overflow:hidden;letter-spacing:-0.25px;">3572.74</div>
<div class="t" style="left:620.7px;top:106.5px;font-size:11.5px;color:#d6d6d6;letter-spacing:-0.250px;font-weight:bold;">H:</div>
<div class="t" style="left:641.5px;top:106.3px;font-size:11.5px;color:#f2f2f2;width:37.0px;overflow:hidden;letter-spacing:-0.25px;">1197.56</div>
<div class="t" style="left:700.3px;top:106px;font-size:12.5px;color:#b8b8b8;letter-spacing:-0.601px;">px</div>
<div class="t" style="left:5.8px;top:577px;font-size:25px;color:#d2d2d2;font-weight:bold;">A</div>
<div class="t" style="left:175.2px;top:131px;font-size:9.3px;color:#e0e0e0;letter-spacing:-0.245px;">2500</div>
<div class="t" style="left:298.9665px;top:131px;font-size:9.3px;color:#e0e0e0;letter-spacing:-0.109px;">3k</div>
<div class="t" style="left:422.733px;top:131px;font-size:9.3px;color:#e0e0e0;letter-spacing:-0.245px;">3500</div>
<div class="t" style="left:546.4995px;top:131px;font-size:9.3px;color:#e0e0e0;letter-spacing:-0.109px;">4k</div>
<div class="t" style="left:670.2660000000001px;top:131px;font-size:9.3px;color:#e0e0e0;letter-spacing:-0.245px;">4500</div>
<div class="t" style="left:794.0325px;top:131px;font-size:9.3px;color:#e0e0e0;letter-spacing:-0.109px;">5k</div>
<div class="t" style="left:917.799px;top:131px;font-size:9.3px;color:#e0e0e0;letter-spacing:-0.245px;">5500</div>
<div class="t" style="left:40px;top:239.8px;font-size:9.3px;color:#e0e0e0;">2</div>
<div class="t" style="left:40px;top:248.70000000000002px;font-size:9.3px;color:#e0e0e0;">5</div>
<div class="t" style="left:40px;top:257.6px;font-size:9.3px;color:#e0e0e0;">0</div>
<div class="t" style="left:40px;top:266.5px;font-size:9.3px;color:#e0e0e0;">0</div>
<div class="t" style="left:40px;top:363.5665px;font-size:9.3px;color:#e0e0e0;">2</div>
<div class="t" style="left:40px;top:372.4665px;font-size:9.3px;color:#e0e0e0;">k</div>
<div class="t" style="left:40px;top:487.333px;font-size:9.3px;color:#e0e0e0;">1</div>
<div class="t" style="left:40px;top:496.233px;font-size:9.3px;color:#e0e0e0;">5</div>
<div class="t" style="left:40px;top:505.13300000000004px;font-size:9.3px;color:#e0e0e0;">0</div>
<div class="t" style="left:40px;top:514.033px;font-size:9.3px;color:#e0e0e0;">0</div>
<div class="t" style="left:40px;top:611.0995px;font-size:9.3px;color:#e0e0e0;">1</div>
<div class="t" style="left:40px;top:619.9995px;font-size:9.3px;color:#e0e0e0;">0</div>
<div class="t" style="left:40px;top:628.8995px;font-size:9.3px;color:#e0e0e0;">0</div>
<div class="t" style="left:40px;top:637.7995000000001px;font-size:9.3px;color:#e0e0e0;">0</div>
<div class="t" style="left:1040.4px;top:135.5px;font-size:12.5px;color:#e8e8e8;letter-spacing:0.242px;">Swatches (Shift+Ctrl+W)</div>
<div class="t" style="left:1044.6px;top:556.5px;font-size:12.5px;color:#ececec;letter-spacing:0.218px;">Align and Distribute (Shift+Ctrl+A)</div>
<div class="t" style="left:1044.6px;top:576.5px;font-size:12.5px;color:#ececec;letter-spacing:0.062px;">Export PNG Image (Shift+Ctrl+E)</div>
<div class="t" style="left:1044.6px;top:596.5px;font-size:12.5px;color:#ececec;letter-spacing:0.221px;">Fill and Stroke (Shift+Ctrl+F)</div>
<div class="t" style="left:1044.6px;top:616.5px;font-size:12.5px;color:#ececec;letter-spacing:0.185px;">Layers (Shift+Ctrl+L)</div>
<div class="t" style="left:1044.6px;top:636.5px;font-size:12.5px;color:#222222;letter-spacing:0.276px;">Swatches (Shift+Ctrl+W)</div>
<div class="t" style="left:2px;top:701.5px;font-size:11.5px;color:#e6e6e6;letter-spacing:-0.577px;">Fill:</div>
<div class="t" style="left:2px;top:715px;font-size:11.5px;color:#e6e6e6;letter-spacing:-0.347px;">Stroke:</div>
<div class="t" style="left:71.4px;top:701.5px;font-size:11.5px;color:#e6e6e6;letter-spacing:-0.523px;">N/A</div>
<div class="t" style="left:71.4px;top:715px;font-size:11.5px;color:#e6e6e6;letter-spacing:-0.523px;">N/A</div>
<div class="t" style="left:125.6px;top:708px;font-size:12px;color:#e6e6e6;letter-spacing:-0.734px;">O:</div>
<div class="t" style="left:143.5px;top:708px;font-size:12px;color:#f2f2f2;letter-spacing:-0.674px;">88</div>
<div class="t" style="left:245px;top:708px;font-size:12.5px;color:#e6e6e6;letter-spacing:0.154px;font-weight:bold;">•Layer 2</div>
<div class="t" style="left:331.6px;top:708px;font-size:12.5px;color:#e6e6e6;letter-spacing:0.188px;">No objects selected. Click, Shift+click, Alt+scroll mouse on top of objects, or drag around objects to select.</div>
<div class="t" style="left:1226.7px;top:703px;font-size:10px;color:#e6e6e6;letter-spacing:-0.224px;">X:</div>
<div class="t" style="left:1239.3px;top:703px;font-size:10px;color:#e6e6e6;letter-spacing:0.828px;font-family:'Liberation Mono',monospace;">5325.52</div>
<div class="t" style="left:1226.7px;top:716px;font-size:10px;color:#e6e6e6;letter-spacing:0.052px;">Y:</div>
<div class="t" style="left:1239.3px;top:716px;font-size:10px;color:#e6e6e6;letter-spacing:0.828px;font-family:'Liberation Mono',monospace;">1155.61</div>
<div class="t" style="left:1296.8px;top:709px;font-size:11.5px;color:#e6e6e6;letter-spacing:-0.610px;">Z:</div>
<div class="t" style="left:1318.7px;top:709px;font-size:12px;color:#e6e6e6;letter-spacing:-0.439px;">25%</div>
<div style="left:1366px;top:0px;width:2px;height:726px;background:#fff"></div>
</body></html>
